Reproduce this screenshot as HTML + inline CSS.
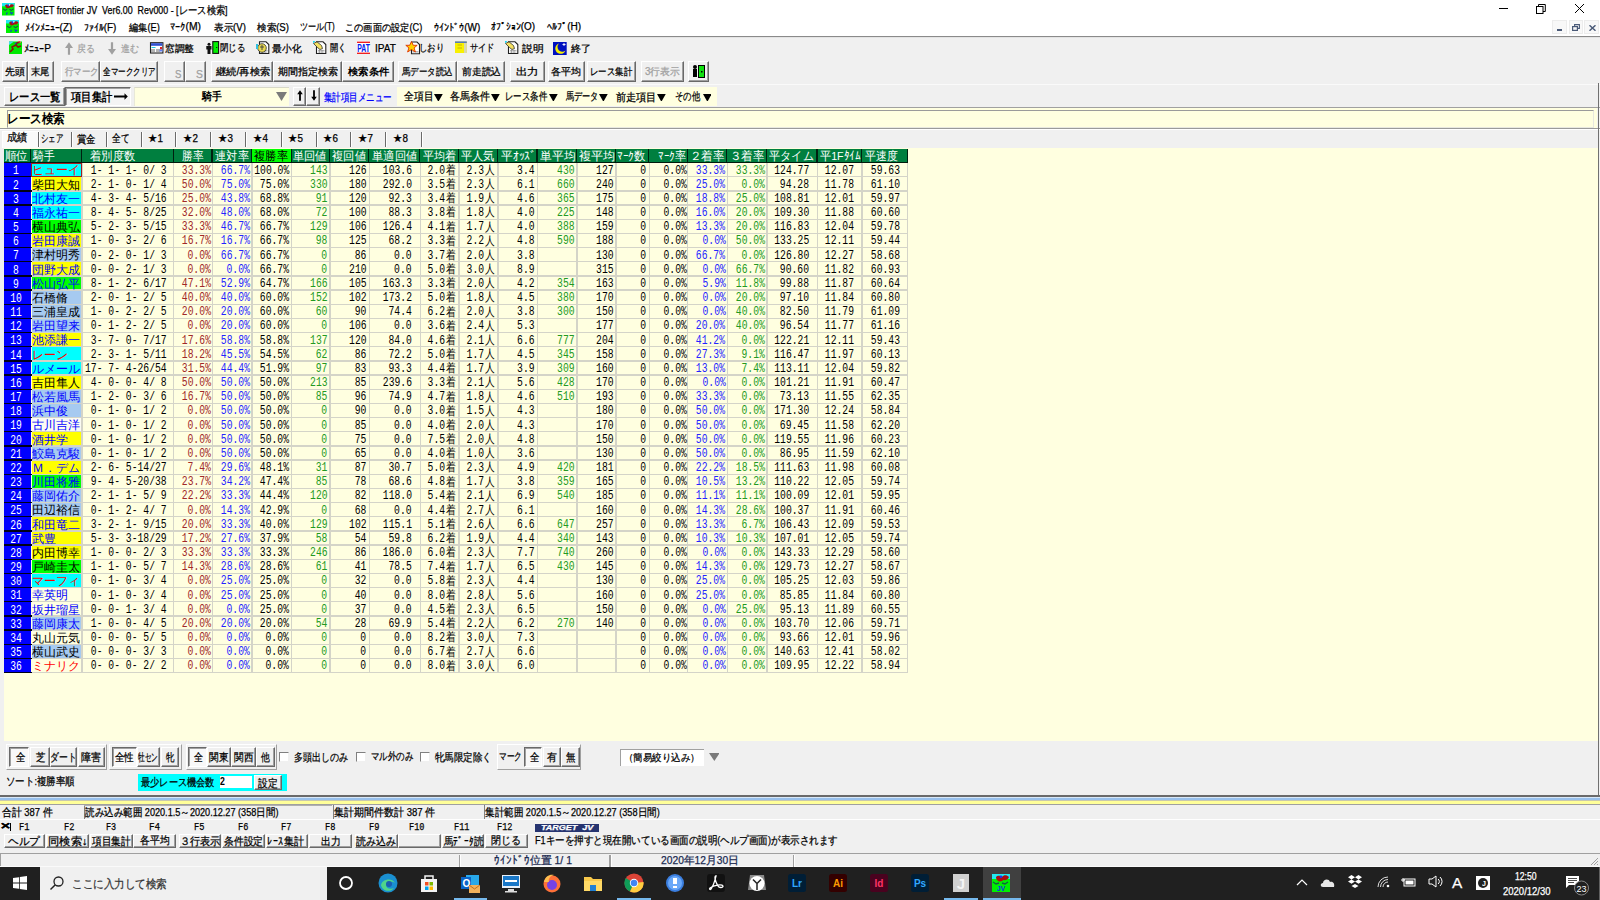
<!DOCTYPE html>
<html><head><meta charset="utf-8"><title>TARGET frontier JV</title>
<style>
html,body{margin:0;padding:0;width:1600px;height:900px;overflow:hidden;background:#f0f0f0}
body{position:relative;font-family:"Liberation Sans",sans-serif}
.a{position:absolute;box-sizing:content-box}
.t{position:absolute;white-space:nowrap;overflow:visible;-webkit-text-stroke:0.25px currentColor}
svg{display:block}
.m{position:absolute;white-space:pre;font-family:'Liberation Mono',monospace;font-size:12px;line-height:14.17px;height:14.17px;color:#000}
.ml{transform-origin:0 50%;transform:scaleX(.81)}
.mr{transform-origin:100% 50%;transform:scaleX(.81)}
.mc{width:100px;text-align:center;transform-origin:50% 50%;transform:scaleX(.81)}
.j{font-family:'Liberation Sans',sans-serif;font-size:12.2px;line-height:0;position:relative;top:0.3px;margin-left:1.2px}
.nm{position:absolute;white-space:pre;font-size:11.7px;line-height:14.17px;height:14.17px}
</style></head><body>
<div class="a" style="left:0.00px;top:0.00px;width:1600.00px;height:36.00px;background:#fff"></div>
<svg class="a" style="left:2.2px;top:3px" width="12.5" height="12.5" viewBox="0 0 12 12"><rect width="12" height="12" fill="#00f000"/><rect width="12" height="3.2" fill="#20e8f0"/><path d="M3 2.2C4 1 6 1.5 7 2.5C8 1 10 0.5 11.5 2C11 4 9 4.5 8 4C7 5 5 5.5 4 4.5C3.5 4 3 3 3 2.2Z" fill="#a81010"/><circle cx="6" cy="2.3" r="0.9" fill="#2030f0"/><circle cx="7.2" cy="1.8" r="0.6" fill="#fff"/><path d="M1 5.5L3 7L5 6M7 6L9 7L11 5.5" fill="none" stroke="#106040" stroke-width="1"/><path d="M5 9L4.3 11M8 8.5L9 10.5L10.5 9" fill="none" stroke="#1030e0" stroke-width="1"/></svg>
<div id="f0" class="t" style="left:19.20px;top:9.60px;line-height:0;font-size:10.5px;color:#000;transform-origin:0 0;transform:scaleX(0.8458);">TARGET frontier JV&nbsp; Ver6.00&nbsp; Rev000 - [レース検索]</div>
<div class="a" style="left:1499.00px;top:8.00px;width:8.75px;height:1.00px;background:#000"></div>
<svg class="a" style="left:1536px;top:4px" width="10" height="10" viewBox="0 0 10 10"><rect x="0.5" y="2.5" width="6.5" height="7" fill="none" stroke="#000" stroke-width="1"/><path d="M2.5 2.5 V0.5 H9.3 V7.5 H7" fill="none" stroke="#000" stroke-width="1"/></svg>
<svg class="a" style="left:1575px;top:4px" width="9" height="9" viewBox="0 0 9 9"><path d="M0 0 L9 9 M9 0 L0 9" stroke="#000" stroke-width="1"/></svg>
<svg class="a" style="left:6px;top:20px" width="13" height="13" viewBox="0 0 12 12"><rect width="12" height="12" fill="#00f000"/><rect width="12" height="3.2" fill="#20e8f0"/><path d="M3 2.2C4 1 6 1.5 7 2.5C8 1 10 0.5 11.5 2C11 4 9 4.5 8 4C7 5 5 5.5 4 4.5C3.5 4 3 3 3 2.2Z" fill="#a81010"/><circle cx="6" cy="2.3" r="0.9" fill="#2030f0"/><circle cx="7.2" cy="1.8" r="0.6" fill="#fff"/><path d="M1 5.5L3 7L5 6M7 6L9 7L11 5.5" fill="none" stroke="#106040" stroke-width="1"/><path d="M5 9L4.3 11M8 8.5L9 10.5L10.5 9" fill="none" stroke="#1030e0" stroke-width="1"/></svg>
<div id="f1" class="t" style="left:25.30px;top:27.80px;line-height:0;font-size:10px;color:#000;transform-origin:0 0;transform:scaleX(0.9886);">ﾒｲﾝﾒﾆｭｰ(Z)</div>
<div id="f2" class="t" style="left:83.50px;top:27.80px;line-height:0;font-size:10px;color:#000;transform-origin:0 0;transform:scaleX(0.9834);">ﾌｧｲﾙ(F)</div>
<div id="f3" class="t" style="left:128.52px;top:27.80px;line-height:0;font-size:10px;color:#000;transform-origin:0 0;transform:scaleX(0.9235);">編集(E)</div>
<div id="f4" class="t" style="left:170.30px;top:27.30px;line-height:0;font-size:10px;color:#000;transform-origin:0 0;transform:scaleX(1.0351);">ﾏｰｸ(M)</div>
<div id="f5" class="t" style="left:213.90px;top:27.80px;line-height:0;font-size:10px;color:#000;transform-origin:0 0;transform:scaleX(0.9545);">表示(V)</div>
<div id="f6" class="t" style="left:257.40px;top:27.80px;line-height:0;font-size:10px;color:#000;transform-origin:0 0;transform:scaleX(0.9576);">検索(S)</div>
<div id="f7" class="t" style="left:300.30px;top:27.30px;line-height:0;font-size:10px;color:#000;transform-origin:0 0;transform:scaleX(0.8106);">ツール(T)</div>
<div id="f8" class="t" style="left:345.38px;top:27.80px;line-height:0;font-size:10px;color:#000;transform-origin:0 0;transform:scaleX(0.9206);">この画面の設定(C)</div>
<div id="f9" class="t" style="left:433.50px;top:27.80px;line-height:0;font-size:10px;color:#000;transform-origin:0 0;transform:scaleX(1.0051);">ｳｲﾝﾄﾞｳ(W)</div>
<div id="f10" class="t" style="left:491.00px;top:27.30px;line-height:0;font-size:10px;color:#000;transform-origin:0 0;transform:scaleX(0.9930);">ｵﾌﾟｼｮﾝ(O)</div>
<div id="f11" class="t" style="left:547.00px;top:27.30px;line-height:0;font-size:10px;color:#000;transform-origin:0 0;transform:scaleX(1.0074);">ﾍﾙﾌﾟ(H)</div>
<div class="a" style="left:1552.40px;top:20.30px;width:14.60px;height:14.20px;background:#f8f8f8;border:1px solid #ececec;box-sizing:border-box"></div>
<div class="a" style="left:1568.50px;top:20.30px;width:14.30px;height:14.20px;background:#f8f8f8;border:1px solid #ececec;box-sizing:border-box"></div>
<div class="a" style="left:1584.30px;top:20.30px;width:14.70px;height:14.20px;background:#f8f8f8;border:1px solid #ececec;box-sizing:border-box"></div>
<div class="a" style="left:1556.50px;top:29.30px;width:5.30px;height:1.50px;background:#4a5a78"></div>
<svg class="a" style="left:1572px;top:24px" width="8" height="7" viewBox="0 0 8 7"><rect x="0.6" y="2.6" width="4.8" height="3.8" fill="none" stroke="#4a5a78" stroke-width="1.2"/><path d="M2.6 2.6V0.6H7.4V4.4H5.4" fill="none" stroke="#4a5a78" stroke-width="1.1"/></svg>
<svg class="a" style="left:1589px;top:25px" width="7" height="6" viewBox="0 0 7 6"><path d="M0.5 0.3L6.5 5.7M6.5 0.3L0.5 5.7" stroke="#4a5a78" stroke-width="1.5"/></svg>
<div class="a" style="left:0.00px;top:35.50px;width:1600.00px;height:1.20px;background:#8a8a8a"></div>
<div class="a" style="left:0.00px;top:36.70px;width:1600.00px;height:1.00px;background:#e4e4e4"></div>
<div class="a" style="left:0.00px;top:37.70px;width:1600.00px;height:703.30px;background:#f0f0f0"></div>
<svg class="a" style="left:9px;top:41px" width="14" height="13" viewBox="0 0 14 13" overflow="visible"><rect x="0" y="0.5" width="13" height="12.5" fill="#00e800"/><path d="M0 0.5H5L0 4Z" fill="#40e0f0"/><path d="M1 11L4 8L3 6L7 4L8 2L11 1M7 4L9 6L12 5" fill="none" stroke="#8a1010" stroke-width="1.6"/><path d="M5 2.5L7 1.5L7.5 3Z" fill="#2030e0"/><path d="M9 0.5L12 1.5" stroke="#ff5050" stroke-width="1"/></svg>
<div id="f12" class="t" style="left:23.50px;top:48.60px;line-height:0;font-size:10px;color:#000;transform-origin:0 0;transform:scaleX(1.0185);">ﾒﾆｭｰP</div>
<svg class="a" style="left:64.7px;top:42px" width="8" height="13" viewBox="0 0 8 13" overflow="visible"><path d="M4 0.3L8 6H5.1V12.8H2.9V6H0Z" fill="#a0a0a0"/></svg>
<div id="f13" class="t" style="left:77.00px;top:48.60px;line-height:0;font-size:10px;color:#a0a0a0;transform-origin:0 0;transform:scaleX(0.8842);">戻る</div>
<svg class="a" style="left:107.6px;top:42px" width="8" height="13" viewBox="0 0 8 13" overflow="visible"><path d="M4 12.7L8 7H5.1V0.2H2.9V7H0Z" fill="#a0a0a0"/></svg>
<div id="f14" class="t" style="left:121.00px;top:48.60px;line-height:0;font-size:10px;color:#a0a0a0;transform-origin:0 0;transform:scaleX(0.8900);">進む</div>
<svg class="a" style="left:150px;top:41px" width="14" height="13" viewBox="0 0 14 13" overflow="visible"><rect x="0.5" y="1.7" width="12.4" height="10.3" fill="#fff" stroke="#202020" stroke-width="1.1"/><rect x="1" y="2.2" width="11.4" height="2.6" fill="#3050d0"/><path d="M1.5 6.5H5.5" stroke="#20c8e0" stroke-width="1"/><path d="M2 8V11M4 8V11M7 8V11M9 8V11" stroke="#404040" stroke-width=".8"/><rect x="10" y="6" width="2" height="2.5" fill="#e02020"/><rect x="9.5" y="8.5" width="3" height="2" fill="#6080f0"/></svg>
<div id="f15" class="t" style="left:165.00px;top:48.60px;line-height:0;font-size:10px;color:#000;transform-origin:0 0;transform:scaleX(0.9667);">窓調整</div>
<svg class="a" style="left:205.5px;top:41px" width="14" height="13" viewBox="0 0 14 13" overflow="visible"><rect x="6.8" y="0.6" width="5.8" height="11.8" fill="#00f000" stroke="#101010" stroke-width="1.1"/><rect x="10.2" y="6" width="1" height="1" fill="#000"/><circle cx="3" cy="3.2" r="1.5" fill="#101010"/><path d="M0.3 5H5.5V8.5H4.5V13H1.5V8.5H0.3Z" fill="#101010"/></svg>
<div id="f16" class="t" style="left:220.40px;top:48.10px;line-height:0;font-size:10px;color:#000;transform-origin:0 0;transform:scaleX(0.8414);">閉じる</div>
<svg class="a" style="left:256px;top:41px" width="14" height="13" viewBox="0 0 14 13" overflow="visible"><path d="M3.5 0.8H10L12.8 3.6V12.5H3.5Z" fill="#fff" stroke="#202020" stroke-width="1.1"/><path d="M5 9.5H11.5M5 11H11.5M6.5 8.5V12M9 8.5V12" stroke="#808080" stroke-width=".6"/><circle cx="6" cy="7" r="4.3" fill="#e8d850" stroke="#303030" stroke-width=".8"/><path d="M4 6H8M6 4V9" stroke="#404040" stroke-width=".9"/><path d="M0 3H2V8H0Z" fill="#30c0e0"/></svg>
<div id="f17" class="t" style="left:271.60px;top:48.60px;line-height:0;font-size:10px;color:#000;transform-origin:0 0;transform:scaleX(0.9800);">最小化</div>
<svg class="a" style="left:312.5px;top:41px" width="14" height="13" viewBox="0 0 14 13" overflow="visible"><path d="M3.5 0.8H10L12.8 3.6V12.5H3.5Z" fill="#fff" stroke="#202020" stroke-width="1.1"/><path d="M5 9.5H11.5M5 11H11.5M6.5 8.5V12M9 8.5V12" stroke="#808080" stroke-width=".6"/><path d="M0.5 2.5L4 0.8L8.5 4.5L9.5 7.5L7 8.5L4.5 6.5Z" fill="#f4e060" stroke="#303030" stroke-width=".8"/><path d="M0 0H2.5L0 2.5Z" fill="#20d8f0"/></svg>
<div id="f18" class="t" style="left:330.00px;top:48.10px;line-height:0;font-size:10px;color:#000;transform-origin:0 0;transform:scaleX(0.8235);">開く</div>
<svg class="a" style="left:356.8px;top:41px" width="14" height="13" viewBox="0 0 14 13" overflow="visible"><rect x="0" y="0" width="13" height="13" fill="#fff"/><text x="0.2" y="11" font-size="10.5" font-weight="bold" fill="#0020f0" font-family="Liberation Sans" textLength="12.6" lengthAdjust="spacingAndGlyphs">PAT</text><rect x="0" y="11.6" width="13" height="1.4" fill="#f02020"/><rect x="0" y="0.6" width="13" height="1.4" fill="#f02020"/></svg>
<div id="f19" class="t" style="left:374.80px;top:49.10px;line-height:0;font-size:10px;color:#000;transform-origin:0 0;transform:scaleX(1.0032);">IPAT</div>
<svg class="a" style="left:406px;top:41px" width="14" height="13" viewBox="0 0 14 13" overflow="visible"><path d="M5.5 1H11L13.5 3.5V12.8H5.5Z" fill="#fff" stroke="#202020" stroke-width="1.1"/><path d="M6.5 10.5H12.5M6.5 12H12.5" stroke="#808080" stroke-width=".6"/><path d="M5.5 0.5L7.3 4.3H11.2L8.1 6.9L9.4 11L5.5 8.5L1.6 11L2.9 6.9L-0.2 4.3H3.7Z" fill="#ffd000" stroke="#e03000" stroke-width=".9"/></svg>
<div id="f20" class="t" style="left:419.31px;top:48.10px;line-height:0;font-size:10px;color:#000;transform-origin:0 0;transform:scaleX(0.8462);">しおり</div>
<svg class="a" style="left:454.9px;top:41px" width="14" height="13" viewBox="0 0 14 13" overflow="visible"><rect x="0" y="0.5" width="11.8" height="11.5" fill="#f8f000"/><rect x="0" y="0.5" width="11.8" height="1.3" fill="#3060e0"/><rect x="9" y="2" width="2.8" height="10" fill="#d8d8b0"/><path d="M2.5 4H7M2.5 7H7" stroke="#b0a000" stroke-width=".7"/></svg>
<div id="f21" class="t" style="left:469.70px;top:48.10px;line-height:0;font-size:10px;color:#000;transform-origin:0 0;transform:scaleX(0.8241);">サイド</div>
<svg class="a" style="left:504.8px;top:41px" width="14" height="13" viewBox="0 0 14 13" overflow="visible"><path d="M3.5 0.8H10L12.8 3.6V12.5H3.5Z" fill="#fff" stroke="#202020" stroke-width="1.1"/><path d="M5 9.5H11.5M5 11H11.5M6.5 8.5V12M9 8.5V12" stroke="#808080" stroke-width=".6"/><path d="M0.5 2.5L4 0.8L8.5 4.5L9.5 7.5L7 8.5L4.5 6.5Z" fill="#f4e060" stroke="#303030" stroke-width=".8"/><path d="M0 0H2.5L0 2.5Z" fill="#20d8f0"/></svg>
<div id="f22" class="t" style="left:521.70px;top:48.60px;line-height:0;font-size:10px;color:#000;transform-origin:0 0;transform:scaleX(1.0895);">説明</div>
<svg class="a" style="left:553.3px;top:41.5px" width="14" height="13" viewBox="0 0 14 13" overflow="visible"><rect x="0" y="0" width="13.7" height="13" fill="#0010c0"/><path d="M6 1.5A5.3 5.3 0 1 0 12.5 8.5A4.3 4.3 0 1 1 6 1.5Z" fill="#f8f000"/><path d="M11 1V4M9.5 2.5H12.5" stroke="#fff" stroke-width=".9"/></svg>
<div id="f23" class="t" style="left:571.00px;top:48.60px;line-height:0;font-size:10px;color:#000;transform-origin:0 0;">終了</div>
<div class="a" style="left:2.00px;top:60.80px;width:26.00px;height:21.00px;box-sizing:border-box;background:#f0f0f0;border-top:1px solid #fff;border-left:1px solid #fff;border-right:1px solid #696969;border-bottom:1px solid #696969;box-shadow:inset -1px -1px #a0a0a0;"></div>
<div id="f24" class="t" style="left:4.70px;top:72.30px;line-height:0;font-size:10px;color:#000;transform-origin:0 0;transform:scaleX(0.9850);">先頭</div>
<div class="a" style="left:28.00px;top:60.80px;width:26.00px;height:21.00px;box-sizing:border-box;background:#f0f0f0;border-top:1px solid #fff;border-left:1px solid #fff;border-right:1px solid #696969;border-bottom:1px solid #696969;box-shadow:inset -1px -1px #a0a0a0;"></div>
<div id="f25" class="t" style="left:31.00px;top:72.30px;line-height:0;font-size:10px;color:#000;transform-origin:0 0;transform:scaleX(0.9350);">末尾</div>
<div class="a" style="left:61.00px;top:60.80px;width:39.00px;height:21.00px;box-sizing:border-box;background:#f0f0f0;border-top:1px solid #fff;border-left:1px solid #fff;border-right:1px solid #696969;border-bottom:1px solid #696969;box-shadow:inset -1px -1px #a0a0a0;"></div>
<div id="f26" class="t" style="left:64.70px;top:71.80px;line-height:0;font-size:10px;color:#a0a0a0;transform-origin:0 0;transform:scaleX(0.8436);">行マーク</div>
<div class="a" style="left:100.00px;top:60.80px;width:58.00px;height:21.00px;box-sizing:border-box;background:#f0f0f0;border-top:1px solid #fff;border-left:1px solid #fff;border-right:1px solid #696969;border-bottom:1px solid #696969;box-shadow:inset -1px -1px #a0a0a0;"></div>
<div id="f27" class="t" style="left:103.00px;top:72.30px;line-height:0;font-size:10px;color:#000;transform-origin:0 0;transform:scaleX(0.7529);">全マーククリア</div>
<div class="a" style="left:164.00px;top:60.80px;width:21.00px;height:21.00px;box-sizing:border-box;background:#f0f0f0;border-top:1px solid #fff;border-left:1px solid #fff;border-right:1px solid #696969;border-bottom:1px solid #696969;box-shadow:inset -1px -1px #a0a0a0;"></div>
<div class="a" style="left:185.00px;top:60.80px;width:21.00px;height:21.00px;box-sizing:border-box;background:#f0f0f0;border-top:1px solid #fff;border-left:1px solid #fff;border-right:1px solid #696969;border-bottom:1px solid #696969;box-shadow:inset -1px -1px #a0a0a0;"></div>
<div class="a" style="left:211.00px;top:60.80px;width:62.00px;height:21.00px;box-sizing:border-box;background:#f0f0f0;border-top:1px solid #fff;border-left:1px solid #fff;border-right:1px solid #696969;border-bottom:1px solid #696969;box-shadow:inset -1px -1px #a0a0a0;"></div>
<div id="f28" class="t" style="left:215.83px;top:72.30px;line-height:0;font-size:10px;color:#000;transform-origin:0 0;transform:scaleX(1.0264);">継続/再検索</div>
<div class="a" style="left:273.00px;top:60.80px;width:69.00px;height:21.00px;box-sizing:border-box;background:#f0f0f0;border-top:1px solid #fff;border-left:1px solid #fff;border-right:1px solid #696969;border-bottom:1px solid #696969;box-shadow:inset -1px -1px #a0a0a0;"></div>
<div id="f29" class="t" style="left:277.80px;top:72.30px;line-height:0;font-size:10px;color:#000;transform-origin:0 0;">期間指定検索</div>
<div class="a" style="left:342.00px;top:60.80px;width:52.00px;height:21.00px;box-sizing:border-box;background:#f0f0f0;border-top:1px solid #fff;border-left:1px solid #fff;border-right:1px solid #696969;border-bottom:1px solid #696969;box-shadow:inset -1px -1px #a0a0a0;"></div>
<div id="f30" class="t" style="left:347.73px;top:72.30px;line-height:0;font-size:10px;color:#000;transform-origin:0 0;transform:scaleX(1.0317);font-weight:bold;;-webkit-text-stroke:0">検索条件</div>
<div class="a" style="left:398.00px;top:60.80px;width:59.00px;height:21.00px;box-sizing:border-box;background:#f0f0f0;border-top:1px solid #fff;border-left:1px solid #fff;border-right:1px solid #696969;border-bottom:1px solid #696969;box-shadow:inset -1px -1px #a0a0a0;"></div>
<div id="f31" class="t" style="left:402.44px;top:72.30px;line-height:0;font-size:10px;color:#000;transform-origin:0 0;transform:scaleX(0.8426);">馬データ読込</div>
<div class="a" style="left:457.00px;top:60.80px;width:48.00px;height:21.00px;box-sizing:border-box;background:#f0f0f0;border-top:1px solid #fff;border-left:1px solid #fff;border-right:1px solid #696969;border-bottom:1px solid #696969;box-shadow:inset -1px -1px #a0a0a0;"></div>
<div id="f32" class="t" style="left:461.70px;top:72.30px;line-height:0;font-size:10px;color:#000;transform-origin:0 0;transform:scaleX(0.9825);">前走読込</div>
<div class="a" style="left:510.00px;top:60.80px;width:35.00px;height:21.00px;box-sizing:border-box;background:#f0f0f0;border-top:1px solid #fff;border-left:1px solid #fff;border-right:1px solid #696969;border-bottom:1px solid #696969;box-shadow:inset -1px -1px #a0a0a0;"></div>
<div id="f33" class="t" style="left:516.00px;top:72.30px;line-height:0;font-size:10px;color:#000;transform-origin:0 0;transform:scaleX(1.1421);">出力</div>
<div class="a" style="left:548.00px;top:60.80px;width:37.00px;height:21.00px;box-sizing:border-box;background:#f0f0f0;border-top:1px solid #fff;border-left:1px solid #fff;border-right:1px solid #696969;border-bottom:1px solid #696969;box-shadow:inset -1px -1px #a0a0a0;"></div>
<div id="f34" class="t" style="left:551.00px;top:72.30px;line-height:0;font-size:10px;color:#000;transform-origin:0 0;">各平均</div>
<div class="a" style="left:587.00px;top:60.80px;width:49.00px;height:21.00px;box-sizing:border-box;background:#f0f0f0;border-top:1px solid #fff;border-left:1px solid #fff;border-right:1px solid #696969;border-bottom:1px solid #696969;box-shadow:inset -1px -1px #a0a0a0;"></div>
<div id="f35" class="t" style="left:589.86px;top:72.30px;line-height:0;font-size:10px;color:#000;transform-origin:0 0;transform:scaleX(0.8429);">レース集計</div>
<div class="a" style="left:641.00px;top:60.80px;width:43.00px;height:21.00px;box-sizing:border-box;background:#f0f0f0;border-top:1px solid #fff;border-left:1px solid #fff;border-right:1px solid #696969;border-bottom:1px solid #696969;box-shadow:inset -1px -1px #a0a0a0;"></div>
<div id="f36" class="t" style="left:645.00px;top:72.30px;line-height:0;font-size:10px;color:#a0a0a0;transform-origin:0 0;transform:scaleX(0.9786);">3行表示</div>
<div class="a" style="left:688.00px;top:60.80px;width:21.00px;height:21.00px;box-sizing:border-box;background:#f0f0f0;border-top:1px solid #fff;border-left:1px solid #fff;border-right:1px solid #696969;border-bottom:1px solid #696969;box-shadow:inset -1px -1px #a0a0a0;"></div>
<div id="f37" class="t" style="left:175.40px;top:73.80px;line-height:0;font-size:10.5px;color:#a0a0a0;transform-origin:0 0;transform:scaleX(0.9167);">S</div>
<div id="f38" class="t" style="left:196.00px;top:73.80px;line-height:0;font-size:10.5px;color:#a0a0a0;transform-origin:0 0;transform:scaleX(0.9833);">S</div>
<svg class="a" style="left:692px;top:64px" width="13" height="14" viewBox="0 0 13 14"><circle cx="3" cy="3" r="2" fill="#000"/><path d="M1 5H5V13H1Z" fill="#000"/><rect x="6.5" y="1.5" width="6" height="12" fill="#10e010" stroke="#000"/><rect x="9" y="7" width="1.5" height="1.5" fill="#000"/></svg>
<div class="a" style="left:0.00px;top:84.00px;width:1600.00px;height:1.00px;background:#fafafa"></div>
<div class="a" style="left:4.00px;top:86.50px;width:61.00px;height:19.50px;box-sizing:border-box;background:#f0f0f0;border-top:1px solid #fff;border-left:1px solid #fff;border-right:1px solid #696969;border-bottom:1px solid #696969;box-shadow:inset -1px -1px #a0a0a0;"></div>
<div id="f39" class="t" style="left:8.54px;top:96.60px;line-height:0;font-size:11.5px;color:#000;transform-origin:0 0;transform:scaleX(0.8576);font-weight:bold;;-webkit-text-stroke:0">レース一覧</div>
<div class="a" style="left:65.00px;top:86.50px;width:66.00px;height:19.50px;box-sizing:border-box;background:#f4f4f4;border-top:1px solid #696969;border-left:1px solid #696969;border-right:1px solid #fff;border-bottom:1px solid #fff;box-shadow:inset 1px 1px #a0a0a0;"></div>
<div id="f40" class="t" style="left:71.26px;top:96.60px;line-height:0;font-size:11.5px;color:#000;transform-origin:0 0;transform:scaleX(0.8612);font-weight:bold;;-webkit-text-stroke:0">項目集計</div>
<svg class="a" style="left:113.5px;top:93px" width="14" height="7" viewBox="0 0 14 7"><path d="M0 2.6H10.5V0.3L13.8 3.5L10.5 6.7V4.4H0Z" fill="#000"/></svg>
<div class="a" style="left:134.00px;top:86.70px;width:155.00px;height:19.00px;background:#ffffe0;border-top:1px solid #d8d8c8;border-left:1px solid #e8e8d8;box-sizing:border-box"></div>
<div id="f41" class="t" style="left:201.60px;top:96.40px;line-height:0;font-size:11px;color:#000;transform-origin:0 0;transform:scaleX(0.9000);font-weight:bold;-webkit-text-stroke:0">騎手</div>
<svg class="a" style="left:276px;top:92px" width="11" height="9" viewBox="0 0 11 9"><path d="M0 0H11L5.5 9Z" fill="#7a7a7a"/></svg>
<div class="a" style="left:292.50px;top:86.50px;width:13.50px;height:19.50px;box-sizing:border-box;background:#f0f0f0;border-top:1px solid #fff;border-left:1px solid #fff;border-right:1px solid #696969;border-bottom:1px solid #696969;box-shadow:inset -1px -1px #a0a0a0;"></div>
<div class="a" style="left:306.00px;top:86.50px;width:13.50px;height:19.50px;box-sizing:border-box;background:#f0f0f0;border-top:1px solid #fff;border-left:1px solid #fff;border-right:1px solid #696969;border-bottom:1px solid #696969;box-shadow:inset -1px -1px #a0a0a0;"></div>
<svg class="a" style="left:297px;top:90px" width="6" height="11" viewBox="0 0 6 11"><path d="M3 0.3L5.8 4.2H3.9V10.8H2.1V4.2H0.2Z" fill="#000"/></svg>
<svg class="a" style="left:310.5px;top:90px" width="6" height="11" viewBox="0 0 6 11"><path d="M3 10.7L5.8 6.8H3.9V0.2H2.1V6.8H0.2Z" fill="#000"/></svg>
<div id="f42" class="t" style="left:324.00px;top:96.80px;line-height:0;font-size:10.5px;color:#0000ff;transform-origin:0 0;transform:scaleX(0.7727);">集計項目メニュー</div>
<div class="a" style="left:396.60px;top:86.50px;width:320.40px;height:19.00px;background:#ffffe0"></div>
<div id="f43" class="t" style="left:403.75px;top:96.10px;line-height:0;font-size:10.5px;color:#000;transform-origin:0 0;transform:scaleX(0.8871);">全項目</div>
<svg class="a" style="left:433.75px;top:93.6px" width="8.75" height="7.8" viewBox="0 0 10 9" preserveAspectRatio="none"><path d="M0 0H10L5 9Z" fill="#000"/></svg>
<div id="f44" class="t" style="left:450.00px;top:96.10px;line-height:0;font-size:10.5px;color:#000;transform-origin:0 0;transform:scaleX(0.8977);">各馬条件</div>
<svg class="a" style="left:491.25px;top:93.6px" width="8.75" height="7.8" viewBox="0 0 10 9" preserveAspectRatio="none"><path d="M0 0H10L5 9Z" fill="#000"/></svg>
<div id="f45" class="t" style="left:505.49px;top:96.10px;line-height:0;font-size:10.5px;color:#000;transform-origin:0 0;transform:scaleX(0.7639);">レース条件</div>
<svg class="a" style="left:549.25px;top:93.6px" width="8.75" height="7.8" viewBox="0 0 10 9" preserveAspectRatio="none"><path d="M0 0H10L5 9Z" fill="#000"/></svg>
<div id="f46" class="t" style="left:565.74px;top:96.10px;line-height:0;font-size:10.5px;color:#000;transform-origin:0 0;transform:scaleX(0.7386);">馬データ</div>
<svg class="a" style="left:598.75px;top:93.6px" width="8.75" height="7.8" viewBox="0 0 10 9" preserveAspectRatio="none"><path d="M0 0H10L5 9Z" fill="#000"/></svg>
<div id="f47" class="t" style="left:616.25px;top:96.60px;line-height:0;font-size:10.5px;color:#000;transform-origin:0 0;transform:scaleX(0.9226);">前走項目</div>
<svg class="a" style="left:656.75px;top:93.6px" width="8.75" height="7.8" viewBox="0 0 10 9" preserveAspectRatio="none"><path d="M0 0H10L5 9Z" fill="#000"/></svg>
<div id="f48" class="t" style="left:675.00px;top:96.10px;line-height:0;font-size:10.5px;color:#000;transform-origin:0 0;transform:scaleX(0.7576);">その他</div>
<svg class="a" style="left:702.5px;top:93.6px" width="8.75" height="7.8" viewBox="0 0 10 9" preserveAspectRatio="none"><path d="M0 0H10L5 9Z" fill="#000"/></svg>
<div class="a" style="left:0.00px;top:106.80px;width:1600.00px;height:1.20px;background:#a0a0a0"></div>
<div class="a" style="left:0.00px;top:108.00px;width:1597.00px;height:20.50px;background:#ffffe0"></div>
<div class="a" style="left:6.50px;top:109.50px;width:1587.00px;height:18.50px;background:#ffffe0;border-top:1.3px solid #9a9a9a;border-left:1.3px solid #9a9a9a;border-bottom:1px solid #e8e8e0;border-right:1px solid #e8e8e0;box-sizing:border-box"></div>
<div id="f49" class="t" style="left:7.31px;top:119.10px;line-height:0;font-size:12.5px;color:#000;transform-origin:0 0;transform:scaleX(0.8906);font-weight:bold;-webkit-text-stroke:0">レース検索</div>
<div class="a" style="left:0.00px;top:127.50px;width:1600.00px;height:1.20px;background:#9a9a9a"></div>
<div class="a" style="left:0.00px;top:128.70px;width:1600.00px;height:1.00px;background:#fff"></div>
<div class="a" style="left:2.00px;top:130.50px;width:36.80px;height:17.00px;background:#fafafa;border-top:1px solid #fff;border-left:1px solid #fff;box-sizing:border-box"></div>
<div id="f50" class="t" style="left:6.70px;top:136.80px;line-height:0;font-size:10.5px;color:#000;transform-origin:0 0;transform:scaleX(0.9227);">成績</div>
<div class="a" style="left:37.80px;top:132.00px;width:1.00px;height:14.50px;background:#6a6a6a;box-shadow:1px 0 #fff"></div>
<div id="f51" class="t" style="left:41.32px;top:138.00px;line-height:0;font-size:10.5px;color:#000;transform-origin:0 0;transform:scaleX(0.6781);">シェア</div>
<div class="a" style="left:71.00px;top:132.00px;width:1.00px;height:14.50px;background:#6a6a6a;box-shadow:1px 0 #fff"></div>
<div id="f52" class="t" style="left:77.20px;top:138.50px;line-height:0;font-size:10.5px;color:#000;transform-origin:0 0;transform:scaleX(0.8545);">賞金</div>
<div class="a" style="left:106.00px;top:132.00px;width:1.00px;height:14.50px;background:#6a6a6a;box-shadow:1px 0 #fff"></div>
<div id="f53" class="t" style="left:112.40px;top:138.00px;line-height:0;font-size:10.5px;color:#000;transform-origin:0 0;transform:scaleX(0.7905);">全て</div>
<div class="a" style="left:141.00px;top:132.00px;width:1.00px;height:14.50px;background:#6a6a6a;box-shadow:1px 0 #fff"></div>
<div id="f54" class="t" style="left:147.70px;top:138.00px;line-height:0;font-size:10.5px;color:#000;transform-origin:0 0;transform:scaleX(0.9375);">★1</div>
<div class="a" style="left:175.00px;top:132.00px;width:1.00px;height:14.50px;background:#6a6a6a;box-shadow:1px 0 #fff"></div>
<div id="f55" class="t" style="left:182.70px;top:138.00px;line-height:0;font-size:10.5px;color:#000;transform-origin:0 0;transform:scaleX(0.9375);">★2</div>
<div class="a" style="left:210.00px;top:132.00px;width:1.00px;height:14.50px;background:#6a6a6a;box-shadow:1px 0 #fff"></div>
<div id="f56" class="t" style="left:217.70px;top:138.00px;line-height:0;font-size:10.5px;color:#000;transform-origin:0 0;transform:scaleX(0.9375);">★3</div>
<div class="a" style="left:245.00px;top:132.00px;width:1.00px;height:14.50px;background:#6a6a6a;box-shadow:1px 0 #fff"></div>
<div id="f57" class="t" style="left:252.70px;top:138.00px;line-height:0;font-size:10.5px;color:#000;transform-origin:0 0;transform:scaleX(0.9375);">★4</div>
<div class="a" style="left:281.00px;top:132.00px;width:1.00px;height:14.50px;background:#6a6a6a;box-shadow:1px 0 #fff"></div>
<div id="f58" class="t" style="left:287.70px;top:138.00px;line-height:0;font-size:10.5px;color:#000;transform-origin:0 0;transform:scaleX(0.9375);">★5</div>
<div class="a" style="left:316.00px;top:132.00px;width:1.00px;height:14.50px;background:#6a6a6a;box-shadow:1px 0 #fff"></div>
<div id="f59" class="t" style="left:322.70px;top:138.00px;line-height:0;font-size:10.5px;color:#000;transform-origin:0 0;transform:scaleX(0.9375);">★6</div>
<div class="a" style="left:350.00px;top:132.00px;width:1.00px;height:14.50px;background:#6a6a6a;box-shadow:1px 0 #fff"></div>
<div id="f60" class="t" style="left:357.70px;top:138.00px;line-height:0;font-size:10.5px;color:#000;transform-origin:0 0;transform:scaleX(0.9375);">★7</div>
<div class="a" style="left:385.00px;top:132.00px;width:1.00px;height:14.50px;background:#6a6a6a;box-shadow:1px 0 #fff"></div>
<div id="f61" class="t" style="left:392.70px;top:138.00px;line-height:0;font-size:10.5px;color:#000;transform-origin:0 0;transform:scaleX(0.9375);">★8</div>
<div class="a" style="left:421.00px;top:132.00px;width:1.00px;height:14.50px;background:#6a6a6a;box-shadow:1px 0 #fff"></div>
<div class="a" style="left:4.00px;top:147.50px;width:1593.50px;height:593.50px;background:#ffffe0"></div>
<div class="a" style="left:1598.00px;top:83.00px;width:1.30px;height:658.00px;background:#707070"></div>
<div class="a" style="left:4.00px;top:149.00px;width:903.70px;height:13.60px;background:#007f3f"></div>
<div id="f62" class="t" style="left:5.00px;top:155.80px;line-height:0;font-size:11.5px;color:#fff;transform-origin:0 0;transform:scaleX(0.9583);-webkit-text-stroke:0">順位</div>
<div class="a" style="left:30.00px;top:149.00px;width:1.20px;height:14.10px;background:#002010"></div>
<div id="f63" class="t" style="left:33.19px;top:156.30px;line-height:0;font-size:11.5px;color:#fff;transform-origin:0 0;transform:scaleX(0.8920);-webkit-text-stroke:0">騎手</div>
<div class="a" style="left:81.00px;top:149.00px;width:1.20px;height:14.10px;background:#002010"></div>
<div id="f64" class="t" style="left:89.80px;top:156.30px;line-height:0;font-size:11.5px;color:#fff;transform-origin:0 0;transform:scaleX(0.9417);-webkit-text-stroke:0">着別度数</div>
<div class="a" style="left:172.60px;top:149.00px;width:1.20px;height:14.10px;background:#002010"></div>
<div id="f65" class="t" style="left:181.50px;top:156.30px;line-height:0;font-size:11.5px;color:#fff;transform-origin:0 0;transform:scaleX(0.8958);-webkit-text-stroke:0">勝率</div>
<div class="a" style="left:211.40px;top:149.00px;width:1.20px;height:14.10px;background:#002010"></div>
<div id="f66" class="t" style="left:214.60px;top:156.30px;line-height:0;font-size:11.5px;color:#fff;transform-origin:0 0;transform:scaleX(0.9389);-webkit-text-stroke:0">連対率</div>
<div class="a" style="left:251.00px;top:149.00px;width:1.20px;height:14.10px;background:#002010"></div>
<div class="a" style="left:252.00px;top:149.00px;width:39.50px;height:13.60px;background:#00ff00"></div>
<div id="f67" class="t" style="left:254.00px;top:156.30px;line-height:0;font-size:11.5px;color:#000;transform-origin:0 0;transform:scaleX(0.9417);-webkit-text-stroke:0">複勝率</div>
<div class="a" style="left:290.50px;top:149.00px;width:1.20px;height:14.10px;background:#002010"></div>
<div id="f68" class="t" style="left:293.00px;top:155.80px;line-height:0;font-size:11.5px;color:#fff;transform-origin:0 0;transform:scaleX(0.9361);-webkit-text-stroke:0">単回値</div>
<div class="a" style="left:329.00px;top:149.00px;width:1.20px;height:14.10px;background:#002010"></div>
<div id="f69" class="t" style="left:331.70px;top:155.80px;line-height:0;font-size:11.5px;color:#fff;transform-origin:0 0;transform:scaleX(0.9389);-webkit-text-stroke:0">複回値</div>
<div class="a" style="left:368.30px;top:149.00px;width:1.20px;height:14.10px;background:#002010"></div>
<div id="f70" class="t" style="left:371.50px;top:156.30px;line-height:0;font-size:11.5px;color:#fff;transform-origin:0 0;transform:scaleX(0.9427);-webkit-text-stroke:0">単適回値</div>
<div class="a" style="left:419.30px;top:149.00px;width:1.20px;height:14.10px;background:#002010"></div>
<div id="f71" class="t" style="left:422.50px;top:156.30px;line-height:0;font-size:11.5px;color:#fff;transform-origin:0 0;transform:scaleX(0.9167);-webkit-text-stroke:0">平均着</div>
<div class="a" style="left:458.00px;top:149.00px;width:1.20px;height:14.10px;background:#002010"></div>
<div id="f72" class="t" style="left:461.30px;top:155.80px;line-height:0;font-size:11.5px;color:#fff;transform-origin:0 0;transform:scaleX(0.9361);-webkit-text-stroke:0">平人気</div>
<div class="a" style="left:497.00px;top:149.00px;width:1.20px;height:14.10px;background:#002010"></div>
<div id="f73" class="t" style="left:500.80px;top:155.80px;line-height:0;font-size:11.5px;color:#fff;transform-origin:0 0;transform:scaleX(0.9735);-webkit-text-stroke:0">平ｵｯｽﾞ</div>
<div class="a" style="left:536.40px;top:149.00px;width:1.20px;height:14.10px;background:#002010"></div>
<div id="f74" class="t" style="left:539.60px;top:155.80px;line-height:0;font-size:11.5px;color:#fff;transform-origin:0 0;transform:scaleX(0.9829);-webkit-text-stroke:0">単平均</div>
<div class="a" style="left:576.00px;top:149.00px;width:1.20px;height:14.10px;background:#002010"></div>
<div id="f75" class="t" style="left:578.50px;top:155.80px;line-height:0;font-size:11.5px;color:#fff;transform-origin:0 0;transform:scaleX(1.0086);-webkit-text-stroke:0">複平均</div>
<div class="a" style="left:615.00px;top:149.00px;width:1.20px;height:14.10px;background:#002010"></div>
<div id="f76" class="t" style="left:617.40px;top:155.80px;line-height:0;font-size:11.5px;color:#fff;transform-origin:0 0;transform:scaleX(0.9533);-webkit-text-stroke:0">ﾏｰｸ数</div>
<div class="a" style="left:648.30px;top:149.00px;width:1.20px;height:14.10px;background:#002010"></div>
<div id="f77" class="t" style="left:657.60px;top:156.30px;line-height:0;font-size:11.5px;color:#fff;transform-origin:0 0;transform:scaleX(0.9333);-webkit-text-stroke:0">ﾏｰｸ率</div>
<div class="a" style="left:686.80px;top:149.00px;width:1.20px;height:14.10px;background:#002010"></div>
<div id="f78" class="t" style="left:689.93px;top:156.30px;line-height:0;font-size:11.5px;color:#fff;transform-origin:0 0;transform:scaleX(0.9576);-webkit-text-stroke:0">２着率</div>
<div class="a" style="left:726.30px;top:149.00px;width:1.20px;height:14.10px;background:#002010"></div>
<div id="f79" class="t" style="left:729.69px;top:156.30px;line-height:0;font-size:11.5px;color:#fff;transform-origin:0 0;transform:scaleX(0.9529);-webkit-text-stroke:0">３着率</div>
<div class="a" style="left:766.00px;top:149.00px;width:1.20px;height:14.10px;background:#002010"></div>
<div id="f80" class="t" style="left:769.00px;top:155.80px;line-height:0;font-size:11.5px;color:#fff;transform-origin:0 0;transform:scaleX(0.9313);-webkit-text-stroke:0">平タイム</div>
<div class="a" style="left:816.40px;top:149.00px;width:1.20px;height:14.10px;background:#002010"></div>
<div id="f81" class="t" style="left:820.00px;top:155.80px;line-height:0;font-size:11.5px;color:#fff;transform-origin:0 0;transform:scaleX(0.9304);-webkit-text-stroke:0">平1Fﾀｲﾑ</div>
<div class="a" style="left:861.00px;top:149.00px;width:1.20px;height:14.10px;background:#002010"></div>
<div id="f82" class="t" style="left:865.20px;top:156.30px;line-height:0;font-size:11.5px;color:#fff;transform-origin:0 0;transform:scaleX(0.9111);-webkit-text-stroke:0">平速度</div>
<div class="a" style="left:906.70px;top:149.00px;width:1.20px;height:14.10px;background:#002010"></div>
<div class="a" style="left:4.00px;top:161.60px;width:903.70px;height:1.40px;background:#001a0c"></div>
<div class="a" style="left:31.00px;top:162.60px;width:876.70px;height:510.00px;background:#ffffe0"></div>
<div class="a" style="left:31.00px;top:176.07px;width:876.70px;height:1.30px;background:#d4d4c8"></div>
<div class="a" style="left:31.00px;top:190.23px;width:876.70px;height:1.30px;background:#d4d4c8"></div>
<div class="a" style="left:31.00px;top:204.40px;width:876.70px;height:1.30px;background:#d4d4c8"></div>
<div class="a" style="left:31.00px;top:218.57px;width:876.70px;height:1.30px;background:#d4d4c8"></div>
<div class="a" style="left:31.00px;top:232.73px;width:876.70px;height:1.30px;background:#d4d4c8"></div>
<div class="a" style="left:31.00px;top:246.90px;width:876.70px;height:1.30px;background:#d4d4c8"></div>
<div class="a" style="left:31.00px;top:261.07px;width:876.70px;height:1.30px;background:#d4d4c8"></div>
<div class="a" style="left:31.00px;top:275.23px;width:876.70px;height:1.30px;background:#d4d4c8"></div>
<div class="a" style="left:31.00px;top:289.40px;width:876.70px;height:1.30px;background:#d4d4c8"></div>
<div class="a" style="left:31.00px;top:303.57px;width:876.70px;height:1.30px;background:#d4d4c8"></div>
<div class="a" style="left:31.00px;top:317.73px;width:876.70px;height:1.30px;background:#d4d4c8"></div>
<div class="a" style="left:31.00px;top:331.90px;width:876.70px;height:1.30px;background:#d4d4c8"></div>
<div class="a" style="left:31.00px;top:346.07px;width:876.70px;height:1.30px;background:#d4d4c8"></div>
<div class="a" style="left:31.00px;top:360.23px;width:876.70px;height:1.30px;background:#d4d4c8"></div>
<div class="a" style="left:31.00px;top:374.40px;width:876.70px;height:1.30px;background:#d4d4c8"></div>
<div class="a" style="left:31.00px;top:388.57px;width:876.70px;height:1.30px;background:#d4d4c8"></div>
<div class="a" style="left:31.00px;top:402.73px;width:876.70px;height:1.30px;background:#d4d4c8"></div>
<div class="a" style="left:31.00px;top:416.90px;width:876.70px;height:1.30px;background:#d4d4c8"></div>
<div class="a" style="left:31.00px;top:431.07px;width:876.70px;height:1.30px;background:#d4d4c8"></div>
<div class="a" style="left:31.00px;top:445.23px;width:876.70px;height:1.30px;background:#d4d4c8"></div>
<div class="a" style="left:31.00px;top:459.40px;width:876.70px;height:1.30px;background:#d4d4c8"></div>
<div class="a" style="left:31.00px;top:473.57px;width:876.70px;height:1.30px;background:#d4d4c8"></div>
<div class="a" style="left:31.00px;top:487.73px;width:876.70px;height:1.30px;background:#d4d4c8"></div>
<div class="a" style="left:31.00px;top:501.90px;width:876.70px;height:1.30px;background:#d4d4c8"></div>
<div class="a" style="left:31.00px;top:516.07px;width:876.70px;height:1.30px;background:#d4d4c8"></div>
<div class="a" style="left:31.00px;top:530.23px;width:876.70px;height:1.30px;background:#d4d4c8"></div>
<div class="a" style="left:31.00px;top:544.40px;width:876.70px;height:1.30px;background:#d4d4c8"></div>
<div class="a" style="left:31.00px;top:558.57px;width:876.70px;height:1.30px;background:#d4d4c8"></div>
<div class="a" style="left:31.00px;top:572.73px;width:876.70px;height:1.30px;background:#d4d4c8"></div>
<div class="a" style="left:31.00px;top:586.90px;width:876.70px;height:1.30px;background:#d4d4c8"></div>
<div class="a" style="left:31.00px;top:601.07px;width:876.70px;height:1.30px;background:#d4d4c8"></div>
<div class="a" style="left:31.00px;top:615.23px;width:876.70px;height:1.30px;background:#d4d4c8"></div>
<div class="a" style="left:31.00px;top:629.40px;width:876.70px;height:1.30px;background:#d4d4c8"></div>
<div class="a" style="left:31.00px;top:643.57px;width:876.70px;height:1.30px;background:#d4d4c8"></div>
<div class="a" style="left:31.00px;top:657.73px;width:876.70px;height:1.30px;background:#d4d4c8"></div>
<div class="a" style="left:31.00px;top:671.90px;width:876.70px;height:1.30px;background:#d4d4c8"></div>
<div class="a" style="left:81.30px;top:162.60px;width:1.30px;height:510.00px;background:#d4d4c8"></div>
<div class="a" style="left:172.90px;top:162.60px;width:1.30px;height:510.00px;background:#d4d4c8"></div>
<div class="a" style="left:211.70px;top:162.60px;width:1.30px;height:510.00px;background:#d4d4c8"></div>
<div class="a" style="left:251.30px;top:162.60px;width:1.30px;height:510.00px;background:#d4d4c8"></div>
<div class="a" style="left:290.80px;top:162.60px;width:1.30px;height:510.00px;background:#d4d4c8"></div>
<div class="a" style="left:329.30px;top:162.60px;width:1.30px;height:510.00px;background:#d4d4c8"></div>
<div class="a" style="left:368.60px;top:162.60px;width:1.30px;height:510.00px;background:#d4d4c8"></div>
<div class="a" style="left:419.60px;top:162.60px;width:1.30px;height:510.00px;background:#d4d4c8"></div>
<div class="a" style="left:458.30px;top:162.60px;width:1.30px;height:510.00px;background:#d4d4c8"></div>
<div class="a" style="left:497.30px;top:162.60px;width:1.30px;height:510.00px;background:#d4d4c8"></div>
<div class="a" style="left:536.70px;top:162.60px;width:1.30px;height:510.00px;background:#d4d4c8"></div>
<div class="a" style="left:576.30px;top:162.60px;width:1.30px;height:510.00px;background:#d4d4c8"></div>
<div class="a" style="left:615.30px;top:162.60px;width:1.30px;height:510.00px;background:#d4d4c8"></div>
<div class="a" style="left:648.60px;top:162.60px;width:1.30px;height:510.00px;background:#d4d4c8"></div>
<div class="a" style="left:687.10px;top:162.60px;width:1.30px;height:510.00px;background:#d4d4c8"></div>
<div class="a" style="left:726.60px;top:162.60px;width:1.30px;height:510.00px;background:#d4d4c8"></div>
<div class="a" style="left:766.30px;top:162.60px;width:1.30px;height:510.00px;background:#d4d4c8"></div>
<div class="a" style="left:816.70px;top:162.60px;width:1.30px;height:510.00px;background:#d4d4c8"></div>
<div class="a" style="left:861.30px;top:162.60px;width:1.30px;height:510.00px;background:#d4d4c8"></div>
<div class="a" style="left:907.00px;top:162.60px;width:1.30px;height:510.00px;background:#d4d4c8"></div>
<div class="a" style="left:4.00px;top:162.60px;width:27.00px;height:510.00px;background:#0000ff"></div>
<div class="m mc" style="left:-34.50px;top:164.40px;color:#fff">1</div>
<div class="a" style="left:31.60px;top:163.20px;width:49.80px;height:12.97px;background:#00ffff"></div>
<div class="nm" style="left:32.30px;top:163.40px;color:#ff0000">ヒューイ</div>
<div class="m ml" style="left:84.70px;top:163.60px"> 1- 1- 1- 0/ 3</div>
<div class="m mr" style="right:1389.30px;top:163.60px;color:#a02828">33.3%</div>
<div class="m mr" style="right:1349.80px;top:163.60px;color:#2424ff">66.7%</div>
<div class="m mr" style="right:1311.00px;top:163.60px">100.0%</div>
<div class="m mr" style="right:1272.60px;top:163.60px;color:#229922">143</div>
<div class="m mr" style="right:1233.40px;top:163.60px">126</div>
<div class="m mr" style="right:1188.30px;top:163.60px">103.6</div>
<div class="m mr" style="right:1144.10px;top:163.60px">2.0<span class="j">着</span></div>
<div class="m mr" style="right:1105.30px;top:163.60px">2.3<span class="j">人</span></div>
<div class="m mr" style="right:1065.00px;top:163.60px">3.4</div>
<div class="m mr" style="right:1025.60px;top:163.60px;color:#229922">430</div>
<div class="m mr" style="right:986.60px;top:163.60px">127</div>
<div class="m mr" style="right:953.60px;top:163.60px">0</div>
<div class="m mr" style="right:913.30px;top:163.60px">0.0%</div>
<div class="m mr" style="right:874.50px;top:163.60px;color:#2424ff">33.3%</div>
<div class="m mr" style="right:835.00px;top:163.60px;color:#229922">33.3%</div>
<div class="m mr" style="right:790.80px;top:163.60px">124.77</div>
<div class="m mr" style="right:745.60px;top:163.60px">12.07</div>
<div class="m mr" style="right:700.40px;top:163.60px">59.63</div>
<div class="a" style="left:4.00px;top:176.07px;width:27.60px;height:1.40px;background:#000018"></div>
<div class="m mc" style="left:-34.50px;top:178.57px;color:#fff">2</div>
<div class="a" style="left:31.60px;top:177.37px;width:49.80px;height:12.97px;background:#ffff00"></div>
<div class="nm" style="left:32.30px;top:177.57px;color:#000000">柴田大知</div>
<div class="m ml" style="left:84.70px;top:177.77px"> 2- 1- 0- 1/ 4</div>
<div class="m mr" style="right:1389.30px;top:177.77px;color:#a02828">50.0%</div>
<div class="m mr" style="right:1349.80px;top:177.77px;color:#2424ff">75.0%</div>
<div class="m mr" style="right:1311.00px;top:177.77px">75.0%</div>
<div class="m mr" style="right:1272.60px;top:177.77px;color:#229922">330</div>
<div class="m mr" style="right:1233.40px;top:177.77px">180</div>
<div class="m mr" style="right:1188.30px;top:177.77px">292.0</div>
<div class="m mr" style="right:1144.10px;top:177.77px">3.5<span class="j">着</span></div>
<div class="m mr" style="right:1105.30px;top:177.77px">2.3<span class="j">人</span></div>
<div class="m mr" style="right:1065.00px;top:177.77px">6.1</div>
<div class="m mr" style="right:1025.60px;top:177.77px;color:#229922">660</div>
<div class="m mr" style="right:986.60px;top:177.77px">240</div>
<div class="m mr" style="right:953.60px;top:177.77px">0</div>
<div class="m mr" style="right:913.30px;top:177.77px">0.0%</div>
<div class="m mr" style="right:874.50px;top:177.77px;color:#2424ff">25.0%</div>
<div class="m mr" style="right:835.00px;top:177.77px;color:#229922">0.0%</div>
<div class="m mr" style="right:790.80px;top:177.77px">94.28</div>
<div class="m mr" style="right:745.60px;top:177.77px">11.78</div>
<div class="m mr" style="right:700.40px;top:177.77px">61.10</div>
<div class="a" style="left:4.00px;top:190.23px;width:27.60px;height:1.40px;background:#000018"></div>
<div class="m mc" style="left:-34.50px;top:192.73px;color:#fff">3</div>
<div class="a" style="left:31.60px;top:191.53px;width:49.80px;height:12.97px;background:#00ffff"></div>
<div class="nm" style="left:32.30px;top:191.73px;color:#0000ff">北村友一</div>
<div class="m ml" style="left:84.70px;top:191.93px"> 4- 3- 4- 5/16</div>
<div class="m mr" style="right:1389.30px;top:191.93px;color:#a02828">25.0%</div>
<div class="m mr" style="right:1349.80px;top:191.93px;color:#2424ff">43.8%</div>
<div class="m mr" style="right:1311.00px;top:191.93px">68.8%</div>
<div class="m mr" style="right:1272.60px;top:191.93px;color:#229922">91</div>
<div class="m mr" style="right:1233.40px;top:191.93px">120</div>
<div class="m mr" style="right:1188.30px;top:191.93px">92.3</div>
<div class="m mr" style="right:1144.10px;top:191.93px">3.4<span class="j">着</span></div>
<div class="m mr" style="right:1105.30px;top:191.93px">1.9<span class="j">人</span></div>
<div class="m mr" style="right:1065.00px;top:191.93px">4.6</div>
<div class="m mr" style="right:1025.60px;top:191.93px;color:#229922">365</div>
<div class="m mr" style="right:986.60px;top:191.93px">175</div>
<div class="m mr" style="right:953.60px;top:191.93px">0</div>
<div class="m mr" style="right:913.30px;top:191.93px">0.0%</div>
<div class="m mr" style="right:874.50px;top:191.93px;color:#2424ff">18.8%</div>
<div class="m mr" style="right:835.00px;top:191.93px;color:#229922">25.0%</div>
<div class="m mr" style="right:790.80px;top:191.93px">108.81</div>
<div class="m mr" style="right:745.60px;top:191.93px">12.01</div>
<div class="m mr" style="right:700.40px;top:191.93px">59.97</div>
<div class="a" style="left:4.00px;top:204.40px;width:27.60px;height:1.40px;background:#000018"></div>
<div class="m mc" style="left:-34.50px;top:206.90px;color:#fff">4</div>
<div class="a" style="left:31.60px;top:205.70px;width:49.80px;height:12.97px;background:#00ffff"></div>
<div class="nm" style="left:32.30px;top:205.90px;color:#0000ff">福永祐一</div>
<div class="m ml" style="left:84.70px;top:206.10px"> 8- 4- 5- 8/25</div>
<div class="m mr" style="right:1389.30px;top:206.10px;color:#a02828">32.0%</div>
<div class="m mr" style="right:1349.80px;top:206.10px;color:#2424ff">48.0%</div>
<div class="m mr" style="right:1311.00px;top:206.10px">68.0%</div>
<div class="m mr" style="right:1272.60px;top:206.10px;color:#229922">72</div>
<div class="m mr" style="right:1233.40px;top:206.10px">100</div>
<div class="m mr" style="right:1188.30px;top:206.10px">88.3</div>
<div class="m mr" style="right:1144.10px;top:206.10px">3.8<span class="j">着</span></div>
<div class="m mr" style="right:1105.30px;top:206.10px">1.8<span class="j">人</span></div>
<div class="m mr" style="right:1065.00px;top:206.10px">4.0</div>
<div class="m mr" style="right:1025.60px;top:206.10px;color:#229922">225</div>
<div class="m mr" style="right:986.60px;top:206.10px">148</div>
<div class="m mr" style="right:953.60px;top:206.10px">0</div>
<div class="m mr" style="right:913.30px;top:206.10px">0.0%</div>
<div class="m mr" style="right:874.50px;top:206.10px;color:#2424ff">16.0%</div>
<div class="m mr" style="right:835.00px;top:206.10px;color:#229922">20.0%</div>
<div class="m mr" style="right:790.80px;top:206.10px">109.30</div>
<div class="m mr" style="right:745.60px;top:206.10px">11.88</div>
<div class="m mr" style="right:700.40px;top:206.10px">60.60</div>
<div class="a" style="left:4.00px;top:218.57px;width:27.60px;height:1.40px;background:#000018"></div>
<div class="m mc" style="left:-34.50px;top:221.07px;color:#fff">5</div>
<div class="a" style="left:31.60px;top:219.87px;width:49.80px;height:12.97px;background:#00ff00"></div>
<div class="nm" style="left:32.30px;top:220.07px;color:#000000">横山典弘</div>
<div class="m ml" style="left:84.70px;top:220.27px"> 5- 2- 3- 5/15</div>
<div class="m mr" style="right:1389.30px;top:220.27px;color:#a02828">33.3%</div>
<div class="m mr" style="right:1349.80px;top:220.27px;color:#2424ff">46.7%</div>
<div class="m mr" style="right:1311.00px;top:220.27px">66.7%</div>
<div class="m mr" style="right:1272.60px;top:220.27px;color:#229922">129</div>
<div class="m mr" style="right:1233.40px;top:220.27px">106</div>
<div class="m mr" style="right:1188.30px;top:220.27px">126.4</div>
<div class="m mr" style="right:1144.10px;top:220.27px">4.1<span class="j">着</span></div>
<div class="m mr" style="right:1105.30px;top:220.27px">1.7<span class="j">人</span></div>
<div class="m mr" style="right:1065.00px;top:220.27px">4.0</div>
<div class="m mr" style="right:1025.60px;top:220.27px;color:#229922">388</div>
<div class="m mr" style="right:986.60px;top:220.27px">159</div>
<div class="m mr" style="right:953.60px;top:220.27px">0</div>
<div class="m mr" style="right:913.30px;top:220.27px">0.0%</div>
<div class="m mr" style="right:874.50px;top:220.27px;color:#2424ff">13.3%</div>
<div class="m mr" style="right:835.00px;top:220.27px;color:#229922">20.0%</div>
<div class="m mr" style="right:790.80px;top:220.27px">116.83</div>
<div class="m mr" style="right:745.60px;top:220.27px">12.04</div>
<div class="m mr" style="right:700.40px;top:220.27px">59.78</div>
<div class="a" style="left:4.00px;top:232.73px;width:27.60px;height:1.40px;background:#000018"></div>
<div class="m mc" style="left:-34.50px;top:235.23px;color:#fff">6</div>
<div class="a" style="left:31.60px;top:234.03px;width:49.80px;height:12.97px;background:#ffff00"></div>
<div class="nm" style="left:32.30px;top:234.23px;color:#0000ff">岩田康誠</div>
<div class="m ml" style="left:84.70px;top:234.43px"> 1- 0- 3- 2/ 6</div>
<div class="m mr" style="right:1389.30px;top:234.43px;color:#a02828">16.7%</div>
<div class="m mr" style="right:1349.80px;top:234.43px;color:#2424ff">16.7%</div>
<div class="m mr" style="right:1311.00px;top:234.43px">66.7%</div>
<div class="m mr" style="right:1272.60px;top:234.43px;color:#229922">98</div>
<div class="m mr" style="right:1233.40px;top:234.43px">125</div>
<div class="m mr" style="right:1188.30px;top:234.43px">68.2</div>
<div class="m mr" style="right:1144.10px;top:234.43px">3.3<span class="j">着</span></div>
<div class="m mr" style="right:1105.30px;top:234.43px">2.2<span class="j">人</span></div>
<div class="m mr" style="right:1065.00px;top:234.43px">4.8</div>
<div class="m mr" style="right:1025.60px;top:234.43px;color:#229922">590</div>
<div class="m mr" style="right:986.60px;top:234.43px">188</div>
<div class="m mr" style="right:953.60px;top:234.43px">0</div>
<div class="m mr" style="right:913.30px;top:234.43px">0.0%</div>
<div class="m mr" style="right:874.50px;top:234.43px;color:#2424ff">0.0%</div>
<div class="m mr" style="right:835.00px;top:234.43px;color:#229922">50.0%</div>
<div class="m mr" style="right:790.80px;top:234.43px">133.25</div>
<div class="m mr" style="right:745.60px;top:234.43px">12.11</div>
<div class="m mr" style="right:700.40px;top:234.43px">59.44</div>
<div class="a" style="left:4.00px;top:246.90px;width:27.60px;height:1.40px;background:#000018"></div>
<div class="m mc" style="left:-34.50px;top:249.40px;color:#fff">7</div>
<div class="a" style="left:31.60px;top:248.20px;width:49.80px;height:12.97px;background:#a6caf0"></div>
<div class="nm" style="left:32.30px;top:248.40px;color:#000000">津村明秀</div>
<div class="m ml" style="left:84.70px;top:248.60px"> 0- 2- 0- 1/ 3</div>
<div class="m mr" style="right:1389.30px;top:248.60px;color:#a02828">0.0%</div>
<div class="m mr" style="right:1349.80px;top:248.60px;color:#2424ff">66.7%</div>
<div class="m mr" style="right:1311.00px;top:248.60px">66.7%</div>
<div class="m mr" style="right:1272.60px;top:248.60px;color:#229922">0</div>
<div class="m mr" style="right:1233.40px;top:248.60px">86</div>
<div class="m mr" style="right:1188.30px;top:248.60px">0.0</div>
<div class="m mr" style="right:1144.10px;top:248.60px">3.7<span class="j">着</span></div>
<div class="m mr" style="right:1105.30px;top:248.60px">2.0<span class="j">人</span></div>
<div class="m mr" style="right:1065.00px;top:248.60px">3.8</div>
<div class="m mr" style="right:986.60px;top:248.60px">130</div>
<div class="m mr" style="right:953.60px;top:248.60px">0</div>
<div class="m mr" style="right:913.30px;top:248.60px">0.0%</div>
<div class="m mr" style="right:874.50px;top:248.60px;color:#2424ff">66.7%</div>
<div class="m mr" style="right:835.00px;top:248.60px;color:#229922">0.0%</div>
<div class="m mr" style="right:790.80px;top:248.60px">126.80</div>
<div class="m mr" style="right:745.60px;top:248.60px">12.27</div>
<div class="m mr" style="right:700.40px;top:248.60px">58.68</div>
<div class="a" style="left:4.00px;top:261.07px;width:27.60px;height:1.40px;background:#000018"></div>
<div class="m mc" style="left:-34.50px;top:263.57px;color:#fff">8</div>
<div class="a" style="left:31.60px;top:262.37px;width:49.80px;height:12.97px;background:#ffff00"></div>
<div class="nm" style="left:32.30px;top:262.57px;color:#0000ff">団野大成</div>
<div class="m ml" style="left:84.70px;top:262.77px"> 0- 0- 2- 1/ 3</div>
<div class="m mr" style="right:1389.30px;top:262.77px;color:#a02828">0.0%</div>
<div class="m mr" style="right:1349.80px;top:262.77px;color:#2424ff">0.0%</div>
<div class="m mr" style="right:1311.00px;top:262.77px">66.7%</div>
<div class="m mr" style="right:1272.60px;top:262.77px;color:#229922">0</div>
<div class="m mr" style="right:1233.40px;top:262.77px">210</div>
<div class="m mr" style="right:1188.30px;top:262.77px">0.0</div>
<div class="m mr" style="right:1144.10px;top:262.77px">5.0<span class="j">着</span></div>
<div class="m mr" style="right:1105.30px;top:262.77px">3.0<span class="j">人</span></div>
<div class="m mr" style="right:1065.00px;top:262.77px">8.9</div>
<div class="m mr" style="right:986.60px;top:262.77px">315</div>
<div class="m mr" style="right:953.60px;top:262.77px">0</div>
<div class="m mr" style="right:913.30px;top:262.77px">0.0%</div>
<div class="m mr" style="right:874.50px;top:262.77px;color:#2424ff">0.0%</div>
<div class="m mr" style="right:835.00px;top:262.77px;color:#229922">66.7%</div>
<div class="m mr" style="right:790.80px;top:262.77px">90.60</div>
<div class="m mr" style="right:745.60px;top:262.77px">11.82</div>
<div class="m mr" style="right:700.40px;top:262.77px">60.93</div>
<div class="a" style="left:4.00px;top:275.23px;width:27.60px;height:1.40px;background:#000018"></div>
<div class="m mc" style="left:-34.50px;top:277.73px;color:#fff">9</div>
<div class="a" style="left:31.60px;top:276.53px;width:49.80px;height:12.97px;background:#00ff00"></div>
<div class="nm" style="left:32.30px;top:276.73px;color:#0000ff">松山弘平</div>
<div class="m ml" style="left:84.70px;top:276.93px"> 8- 1- 2- 6/17</div>
<div class="m mr" style="right:1389.30px;top:276.93px;color:#a02828">47.1%</div>
<div class="m mr" style="right:1349.80px;top:276.93px;color:#2424ff">52.9%</div>
<div class="m mr" style="right:1311.00px;top:276.93px">64.7%</div>
<div class="m mr" style="right:1272.60px;top:276.93px;color:#229922">166</div>
<div class="m mr" style="right:1233.40px;top:276.93px">105</div>
<div class="m mr" style="right:1188.30px;top:276.93px">163.3</div>
<div class="m mr" style="right:1144.10px;top:276.93px">3.3<span class="j">着</span></div>
<div class="m mr" style="right:1105.30px;top:276.93px">2.0<span class="j">人</span></div>
<div class="m mr" style="right:1065.00px;top:276.93px">4.2</div>
<div class="m mr" style="right:1025.60px;top:276.93px;color:#229922">354</div>
<div class="m mr" style="right:986.60px;top:276.93px">163</div>
<div class="m mr" style="right:953.60px;top:276.93px">0</div>
<div class="m mr" style="right:913.30px;top:276.93px">0.0%</div>
<div class="m mr" style="right:874.50px;top:276.93px;color:#2424ff">5.9%</div>
<div class="m mr" style="right:835.00px;top:276.93px;color:#229922">11.8%</div>
<div class="m mr" style="right:790.80px;top:276.93px">99.88</div>
<div class="m mr" style="right:745.60px;top:276.93px">11.87</div>
<div class="m mr" style="right:700.40px;top:276.93px">60.64</div>
<div class="a" style="left:4.00px;top:289.40px;width:27.60px;height:1.40px;background:#000018"></div>
<div class="m mc" style="left:-34.50px;top:291.90px;color:#fff">10</div>
<div class="a" style="left:31.60px;top:290.70px;width:49.80px;height:12.97px;background:#a6caf0"></div>
<div class="nm" style="left:32.30px;top:290.90px;color:#000000">石橋脩</div>
<div class="m ml" style="left:84.70px;top:291.10px"> 2- 0- 1- 2/ 5</div>
<div class="m mr" style="right:1389.30px;top:291.10px;color:#a02828">40.0%</div>
<div class="m mr" style="right:1349.80px;top:291.10px;color:#2424ff">40.0%</div>
<div class="m mr" style="right:1311.00px;top:291.10px">60.0%</div>
<div class="m mr" style="right:1272.60px;top:291.10px;color:#229922">152</div>
<div class="m mr" style="right:1233.40px;top:291.10px">102</div>
<div class="m mr" style="right:1188.30px;top:291.10px">173.2</div>
<div class="m mr" style="right:1144.10px;top:291.10px">5.0<span class="j">着</span></div>
<div class="m mr" style="right:1105.30px;top:291.10px">1.8<span class="j">人</span></div>
<div class="m mr" style="right:1065.00px;top:291.10px">4.5</div>
<div class="m mr" style="right:1025.60px;top:291.10px;color:#229922">380</div>
<div class="m mr" style="right:986.60px;top:291.10px">170</div>
<div class="m mr" style="right:953.60px;top:291.10px">0</div>
<div class="m mr" style="right:913.30px;top:291.10px">0.0%</div>
<div class="m mr" style="right:874.50px;top:291.10px;color:#2424ff">0.0%</div>
<div class="m mr" style="right:835.00px;top:291.10px;color:#229922">20.0%</div>
<div class="m mr" style="right:790.80px;top:291.10px">97.10</div>
<div class="m mr" style="right:745.60px;top:291.10px">11.84</div>
<div class="m mr" style="right:700.40px;top:291.10px">60.80</div>
<div class="a" style="left:4.00px;top:303.57px;width:27.60px;height:1.40px;background:#000018"></div>
<div class="m mc" style="left:-34.50px;top:306.07px;color:#fff">11</div>
<div class="a" style="left:31.60px;top:304.87px;width:49.80px;height:12.97px;background:#a6caf0"></div>
<div class="nm" style="left:32.30px;top:305.07px;color:#000000">三浦皇成</div>
<div class="m ml" style="left:84.70px;top:305.27px"> 1- 0- 2- 2/ 5</div>
<div class="m mr" style="right:1389.30px;top:305.27px;color:#a02828">20.0%</div>
<div class="m mr" style="right:1349.80px;top:305.27px;color:#2424ff">20.0%</div>
<div class="m mr" style="right:1311.00px;top:305.27px">60.0%</div>
<div class="m mr" style="right:1272.60px;top:305.27px;color:#229922">60</div>
<div class="m mr" style="right:1233.40px;top:305.27px">90</div>
<div class="m mr" style="right:1188.30px;top:305.27px">74.4</div>
<div class="m mr" style="right:1144.10px;top:305.27px">6.2<span class="j">着</span></div>
<div class="m mr" style="right:1105.30px;top:305.27px">2.0<span class="j">人</span></div>
<div class="m mr" style="right:1065.00px;top:305.27px">3.8</div>
<div class="m mr" style="right:1025.60px;top:305.27px;color:#229922">300</div>
<div class="m mr" style="right:986.60px;top:305.27px">150</div>
<div class="m mr" style="right:953.60px;top:305.27px">0</div>
<div class="m mr" style="right:913.30px;top:305.27px">0.0%</div>
<div class="m mr" style="right:874.50px;top:305.27px;color:#2424ff">0.0%</div>
<div class="m mr" style="right:835.00px;top:305.27px;color:#229922">40.0%</div>
<div class="m mr" style="right:790.80px;top:305.27px">82.50</div>
<div class="m mr" style="right:745.60px;top:305.27px">11.79</div>
<div class="m mr" style="right:700.40px;top:305.27px">61.09</div>
<div class="a" style="left:4.00px;top:317.73px;width:27.60px;height:1.40px;background:#000018"></div>
<div class="m mc" style="left:-34.50px;top:320.23px;color:#fff">12</div>
<div class="a" style="left:31.60px;top:319.03px;width:49.80px;height:12.97px;background:#a6caf0"></div>
<div class="nm" style="left:32.30px;top:319.23px;color:#0000ff">岩田望来</div>
<div class="m ml" style="left:84.70px;top:319.43px"> 0- 1- 2- 2/ 5</div>
<div class="m mr" style="right:1389.30px;top:319.43px;color:#a02828">0.0%</div>
<div class="m mr" style="right:1349.80px;top:319.43px;color:#2424ff">20.0%</div>
<div class="m mr" style="right:1311.00px;top:319.43px">60.0%</div>
<div class="m mr" style="right:1272.60px;top:319.43px;color:#229922">0</div>
<div class="m mr" style="right:1233.40px;top:319.43px">106</div>
<div class="m mr" style="right:1188.30px;top:319.43px">0.0</div>
<div class="m mr" style="right:1144.10px;top:319.43px">3.6<span class="j">着</span></div>
<div class="m mr" style="right:1105.30px;top:319.43px">2.4<span class="j">人</span></div>
<div class="m mr" style="right:1065.00px;top:319.43px">5.3</div>
<div class="m mr" style="right:986.60px;top:319.43px">177</div>
<div class="m mr" style="right:953.60px;top:319.43px">0</div>
<div class="m mr" style="right:913.30px;top:319.43px">0.0%</div>
<div class="m mr" style="right:874.50px;top:319.43px;color:#2424ff">20.0%</div>
<div class="m mr" style="right:835.00px;top:319.43px;color:#229922">40.0%</div>
<div class="m mr" style="right:790.80px;top:319.43px">96.54</div>
<div class="m mr" style="right:745.60px;top:319.43px">11.77</div>
<div class="m mr" style="right:700.40px;top:319.43px">61.16</div>
<div class="a" style="left:4.00px;top:331.90px;width:27.60px;height:1.40px;background:#000018"></div>
<div class="m mc" style="left:-34.50px;top:334.40px;color:#fff">13</div>
<div class="a" style="left:31.60px;top:333.20px;width:49.80px;height:12.97px;background:#ffff00"></div>
<div class="nm" style="left:32.30px;top:333.40px;color:#0000ff">池添謙一</div>
<div class="m ml" style="left:84.70px;top:333.60px"> 3- 7- 0- 7/17</div>
<div class="m mr" style="right:1389.30px;top:333.60px;color:#a02828">17.6%</div>
<div class="m mr" style="right:1349.80px;top:333.60px;color:#2424ff">58.8%</div>
<div class="m mr" style="right:1311.00px;top:333.60px">58.8%</div>
<div class="m mr" style="right:1272.60px;top:333.60px;color:#229922">137</div>
<div class="m mr" style="right:1233.40px;top:333.60px">120</div>
<div class="m mr" style="right:1188.30px;top:333.60px">84.0</div>
<div class="m mr" style="right:1144.10px;top:333.60px">4.6<span class="j">着</span></div>
<div class="m mr" style="right:1105.30px;top:333.60px">2.1<span class="j">人</span></div>
<div class="m mr" style="right:1065.00px;top:333.60px">6.6</div>
<div class="m mr" style="right:1025.60px;top:333.60px;color:#229922">777</div>
<div class="m mr" style="right:986.60px;top:333.60px">204</div>
<div class="m mr" style="right:953.60px;top:333.60px">0</div>
<div class="m mr" style="right:913.30px;top:333.60px">0.0%</div>
<div class="m mr" style="right:874.50px;top:333.60px;color:#2424ff">41.2%</div>
<div class="m mr" style="right:835.00px;top:333.60px;color:#229922">0.0%</div>
<div class="m mr" style="right:790.80px;top:333.60px">122.21</div>
<div class="m mr" style="right:745.60px;top:333.60px">12.11</div>
<div class="m mr" style="right:700.40px;top:333.60px">59.43</div>
<div class="a" style="left:4.00px;top:346.07px;width:27.60px;height:1.40px;background:#000018"></div>
<div class="m mc" style="left:-34.50px;top:348.57px;color:#fff">14</div>
<div class="a" style="left:31.60px;top:347.37px;width:49.80px;height:12.97px;background:#00ffff"></div>
<div class="nm" style="left:32.30px;top:347.57px;color:#ff0000">レーン</div>
<div class="m ml" style="left:84.70px;top:347.77px"> 2- 3- 1- 5/11</div>
<div class="m mr" style="right:1389.30px;top:347.77px;color:#a02828">18.2%</div>
<div class="m mr" style="right:1349.80px;top:347.77px;color:#2424ff">45.5%</div>
<div class="m mr" style="right:1311.00px;top:347.77px">54.5%</div>
<div class="m mr" style="right:1272.60px;top:347.77px;color:#229922">62</div>
<div class="m mr" style="right:1233.40px;top:347.77px">86</div>
<div class="m mr" style="right:1188.30px;top:347.77px">72.2</div>
<div class="m mr" style="right:1144.10px;top:347.77px">5.0<span class="j">着</span></div>
<div class="m mr" style="right:1105.30px;top:347.77px">1.7<span class="j">人</span></div>
<div class="m mr" style="right:1065.00px;top:347.77px">4.5</div>
<div class="m mr" style="right:1025.60px;top:347.77px;color:#229922">345</div>
<div class="m mr" style="right:986.60px;top:347.77px">158</div>
<div class="m mr" style="right:953.60px;top:347.77px">0</div>
<div class="m mr" style="right:913.30px;top:347.77px">0.0%</div>
<div class="m mr" style="right:874.50px;top:347.77px;color:#2424ff">27.3%</div>
<div class="m mr" style="right:835.00px;top:347.77px;color:#229922">9.1%</div>
<div class="m mr" style="right:790.80px;top:347.77px">116.47</div>
<div class="m mr" style="right:745.60px;top:347.77px">11.97</div>
<div class="m mr" style="right:700.40px;top:347.77px">60.13</div>
<div class="a" style="left:4.00px;top:360.23px;width:27.60px;height:1.40px;background:#000018"></div>
<div class="m mc" style="left:-34.50px;top:362.73px;color:#fff">15</div>
<div class="a" style="left:31.60px;top:361.53px;width:49.80px;height:12.97px;background:#00ffff"></div>
<div class="nm" style="left:32.30px;top:361.73px;color:#0000ff">ルメール</div>
<div class="m ml" style="left:84.70px;top:361.93px">17- 7- 4-26/54</div>
<div class="m mr" style="right:1389.30px;top:361.93px;color:#a02828">31.5%</div>
<div class="m mr" style="right:1349.80px;top:361.93px;color:#2424ff">44.4%</div>
<div class="m mr" style="right:1311.00px;top:361.93px">51.9%</div>
<div class="m mr" style="right:1272.60px;top:361.93px;color:#229922">97</div>
<div class="m mr" style="right:1233.40px;top:361.93px">83</div>
<div class="m mr" style="right:1188.30px;top:361.93px">93.3</div>
<div class="m mr" style="right:1144.10px;top:361.93px">4.4<span class="j">着</span></div>
<div class="m mr" style="right:1105.30px;top:361.93px">1.7<span class="j">人</span></div>
<div class="m mr" style="right:1065.00px;top:361.93px">3.9</div>
<div class="m mr" style="right:1025.60px;top:361.93px;color:#229922">309</div>
<div class="m mr" style="right:986.60px;top:361.93px">160</div>
<div class="m mr" style="right:953.60px;top:361.93px">0</div>
<div class="m mr" style="right:913.30px;top:361.93px">0.0%</div>
<div class="m mr" style="right:874.50px;top:361.93px;color:#2424ff">13.0%</div>
<div class="m mr" style="right:835.00px;top:361.93px;color:#229922">7.4%</div>
<div class="m mr" style="right:790.80px;top:361.93px">113.11</div>
<div class="m mr" style="right:745.60px;top:361.93px">12.04</div>
<div class="m mr" style="right:700.40px;top:361.93px">59.82</div>
<div class="a" style="left:4.00px;top:374.40px;width:27.60px;height:1.40px;background:#000018"></div>
<div class="m mc" style="left:-34.50px;top:376.90px;color:#fff">16</div>
<div class="a" style="left:31.60px;top:375.70px;width:49.80px;height:12.97px;background:#ffff00"></div>
<div class="nm" style="left:32.30px;top:375.90px;color:#000000">吉田隼人</div>
<div class="m ml" style="left:84.70px;top:376.10px"> 4- 0- 0- 4/ 8</div>
<div class="m mr" style="right:1389.30px;top:376.10px;color:#a02828">50.0%</div>
<div class="m mr" style="right:1349.80px;top:376.10px;color:#2424ff">50.0%</div>
<div class="m mr" style="right:1311.00px;top:376.10px">50.0%</div>
<div class="m mr" style="right:1272.60px;top:376.10px;color:#229922">213</div>
<div class="m mr" style="right:1233.40px;top:376.10px">85</div>
<div class="m mr" style="right:1188.30px;top:376.10px">239.6</div>
<div class="m mr" style="right:1144.10px;top:376.10px">3.3<span class="j">着</span></div>
<div class="m mr" style="right:1105.30px;top:376.10px">2.1<span class="j">人</span></div>
<div class="m mr" style="right:1065.00px;top:376.10px">5.6</div>
<div class="m mr" style="right:1025.60px;top:376.10px;color:#229922">428</div>
<div class="m mr" style="right:986.60px;top:376.10px">170</div>
<div class="m mr" style="right:953.60px;top:376.10px">0</div>
<div class="m mr" style="right:913.30px;top:376.10px">0.0%</div>
<div class="m mr" style="right:874.50px;top:376.10px;color:#2424ff">0.0%</div>
<div class="m mr" style="right:835.00px;top:376.10px;color:#229922">0.0%</div>
<div class="m mr" style="right:790.80px;top:376.10px">101.21</div>
<div class="m mr" style="right:745.60px;top:376.10px">11.91</div>
<div class="m mr" style="right:700.40px;top:376.10px">60.47</div>
<div class="a" style="left:4.00px;top:388.57px;width:27.60px;height:1.40px;background:#000018"></div>
<div class="m mc" style="left:-34.50px;top:391.07px;color:#fff">17</div>
<div class="a" style="left:31.60px;top:389.87px;width:49.80px;height:12.97px;background:#a6caf0"></div>
<div class="nm" style="left:32.30px;top:390.07px;color:#0000ff">松若風馬</div>
<div class="m ml" style="left:84.70px;top:390.27px"> 1- 2- 0- 3/ 6</div>
<div class="m mr" style="right:1389.30px;top:390.27px;color:#a02828">16.7%</div>
<div class="m mr" style="right:1349.80px;top:390.27px;color:#2424ff">50.0%</div>
<div class="m mr" style="right:1311.00px;top:390.27px">50.0%</div>
<div class="m mr" style="right:1272.60px;top:390.27px;color:#229922">85</div>
<div class="m mr" style="right:1233.40px;top:390.27px">96</div>
<div class="m mr" style="right:1188.30px;top:390.27px">74.9</div>
<div class="m mr" style="right:1144.10px;top:390.27px">4.7<span class="j">着</span></div>
<div class="m mr" style="right:1105.30px;top:390.27px">1.8<span class="j">人</span></div>
<div class="m mr" style="right:1065.00px;top:390.27px">4.6</div>
<div class="m mr" style="right:1025.60px;top:390.27px;color:#229922">510</div>
<div class="m mr" style="right:986.60px;top:390.27px">193</div>
<div class="m mr" style="right:953.60px;top:390.27px">0</div>
<div class="m mr" style="right:913.30px;top:390.27px">0.0%</div>
<div class="m mr" style="right:874.50px;top:390.27px;color:#2424ff">33.3%</div>
<div class="m mr" style="right:835.00px;top:390.27px;color:#229922">0.0%</div>
<div class="m mr" style="right:790.80px;top:390.27px">73.13</div>
<div class="m mr" style="right:745.60px;top:390.27px">11.55</div>
<div class="m mr" style="right:700.40px;top:390.27px">62.35</div>
<div class="a" style="left:4.00px;top:402.73px;width:27.60px;height:1.40px;background:#000018"></div>
<div class="m mc" style="left:-34.50px;top:405.23px;color:#fff">18</div>
<div class="a" style="left:31.60px;top:404.03px;width:49.80px;height:12.97px;background:#a6caf0"></div>
<div class="nm" style="left:32.30px;top:404.23px;color:#0000ff">浜中俊</div>
<div class="m ml" style="left:84.70px;top:404.43px"> 0- 1- 0- 1/ 2</div>
<div class="m mr" style="right:1389.30px;top:404.43px;color:#a02828">0.0%</div>
<div class="m mr" style="right:1349.80px;top:404.43px;color:#2424ff">50.0%</div>
<div class="m mr" style="right:1311.00px;top:404.43px">50.0%</div>
<div class="m mr" style="right:1272.60px;top:404.43px;color:#229922">0</div>
<div class="m mr" style="right:1233.40px;top:404.43px">90</div>
<div class="m mr" style="right:1188.30px;top:404.43px">0.0</div>
<div class="m mr" style="right:1144.10px;top:404.43px">3.0<span class="j">着</span></div>
<div class="m mr" style="right:1105.30px;top:404.43px">1.5<span class="j">人</span></div>
<div class="m mr" style="right:1065.00px;top:404.43px">4.3</div>
<div class="m mr" style="right:986.60px;top:404.43px">180</div>
<div class="m mr" style="right:953.60px;top:404.43px">0</div>
<div class="m mr" style="right:913.30px;top:404.43px">0.0%</div>
<div class="m mr" style="right:874.50px;top:404.43px;color:#2424ff">50.0%</div>
<div class="m mr" style="right:835.00px;top:404.43px;color:#229922">0.0%</div>
<div class="m mr" style="right:790.80px;top:404.43px">171.30</div>
<div class="m mr" style="right:745.60px;top:404.43px">12.24</div>
<div class="m mr" style="right:700.40px;top:404.43px">58.84</div>
<div class="a" style="left:4.00px;top:416.90px;width:27.60px;height:1.40px;background:#000018"></div>
<div class="m mc" style="left:-34.50px;top:419.40px;color:#fff">19</div>
<div class="a" style="left:31.60px;top:418.20px;width:49.80px;height:12.97px;background:#fbfbf2"></div>
<div class="nm" style="left:32.30px;top:418.40px;color:#0000ff">古川吉洋</div>
<div class="m ml" style="left:84.70px;top:418.60px"> 0- 1- 0- 1/ 2</div>
<div class="m mr" style="right:1389.30px;top:418.60px;color:#a02828">0.0%</div>
<div class="m mr" style="right:1349.80px;top:418.60px;color:#2424ff">50.0%</div>
<div class="m mr" style="right:1311.00px;top:418.60px">50.0%</div>
<div class="m mr" style="right:1272.60px;top:418.60px;color:#229922">0</div>
<div class="m mr" style="right:1233.40px;top:418.60px">85</div>
<div class="m mr" style="right:1188.30px;top:418.60px">0.0</div>
<div class="m mr" style="right:1144.10px;top:418.60px">4.0<span class="j">着</span></div>
<div class="m mr" style="right:1105.30px;top:418.60px">2.0<span class="j">人</span></div>
<div class="m mr" style="right:1065.00px;top:418.60px">4.3</div>
<div class="m mr" style="right:986.60px;top:418.60px">170</div>
<div class="m mr" style="right:953.60px;top:418.60px">0</div>
<div class="m mr" style="right:913.30px;top:418.60px">0.0%</div>
<div class="m mr" style="right:874.50px;top:418.60px;color:#2424ff">50.0%</div>
<div class="m mr" style="right:835.00px;top:418.60px;color:#229922">0.0%</div>
<div class="m mr" style="right:790.80px;top:418.60px">69.45</div>
<div class="m mr" style="right:745.60px;top:418.60px">11.58</div>
<div class="m mr" style="right:700.40px;top:418.60px">62.20</div>
<div class="a" style="left:4.00px;top:431.07px;width:27.60px;height:1.40px;background:#000018"></div>
<div class="m mc" style="left:-34.50px;top:433.57px;color:#fff">20</div>
<div class="a" style="left:31.60px;top:432.37px;width:49.80px;height:12.97px;background:#ffff00"></div>
<div class="nm" style="left:32.30px;top:432.57px;color:#0000ff">酒井学</div>
<div class="m ml" style="left:84.70px;top:432.77px"> 0- 1- 0- 1/ 2</div>
<div class="m mr" style="right:1389.30px;top:432.77px;color:#a02828">0.0%</div>
<div class="m mr" style="right:1349.80px;top:432.77px;color:#2424ff">50.0%</div>
<div class="m mr" style="right:1311.00px;top:432.77px">50.0%</div>
<div class="m mr" style="right:1272.60px;top:432.77px;color:#229922">0</div>
<div class="m mr" style="right:1233.40px;top:432.77px">75</div>
<div class="m mr" style="right:1188.30px;top:432.77px">0.0</div>
<div class="m mr" style="right:1144.10px;top:432.77px">7.5<span class="j">着</span></div>
<div class="m mr" style="right:1105.30px;top:432.77px">2.0<span class="j">人</span></div>
<div class="m mr" style="right:1065.00px;top:432.77px">4.8</div>
<div class="m mr" style="right:986.60px;top:432.77px">150</div>
<div class="m mr" style="right:953.60px;top:432.77px">0</div>
<div class="m mr" style="right:913.30px;top:432.77px">0.0%</div>
<div class="m mr" style="right:874.50px;top:432.77px;color:#2424ff">50.0%</div>
<div class="m mr" style="right:835.00px;top:432.77px;color:#229922">0.0%</div>
<div class="m mr" style="right:790.80px;top:432.77px">119.55</div>
<div class="m mr" style="right:745.60px;top:432.77px">11.96</div>
<div class="m mr" style="right:700.40px;top:432.77px">60.23</div>
<div class="a" style="left:4.00px;top:445.23px;width:27.60px;height:1.40px;background:#000018"></div>
<div class="m mc" style="left:-34.50px;top:447.73px;color:#fff">21</div>
<div class="a" style="left:31.60px;top:446.53px;width:49.80px;height:12.97px;background:#a6caf0"></div>
<div class="nm" style="left:32.30px;top:446.73px;color:#0000ff">鮫島克駿</div>
<div class="m ml" style="left:84.70px;top:446.93px"> 0- 1- 0- 1/ 2</div>
<div class="m mr" style="right:1389.30px;top:446.93px;color:#a02828">0.0%</div>
<div class="m mr" style="right:1349.80px;top:446.93px;color:#2424ff">50.0%</div>
<div class="m mr" style="right:1311.00px;top:446.93px">50.0%</div>
<div class="m mr" style="right:1272.60px;top:446.93px;color:#229922">0</div>
<div class="m mr" style="right:1233.40px;top:446.93px">65</div>
<div class="m mr" style="right:1188.30px;top:446.93px">0.0</div>
<div class="m mr" style="right:1144.10px;top:446.93px">4.0<span class="j">着</span></div>
<div class="m mr" style="right:1105.30px;top:446.93px">1.0<span class="j">人</span></div>
<div class="m mr" style="right:1065.00px;top:446.93px">3.6</div>
<div class="m mr" style="right:986.60px;top:446.93px">130</div>
<div class="m mr" style="right:953.60px;top:446.93px">0</div>
<div class="m mr" style="right:913.30px;top:446.93px">0.0%</div>
<div class="m mr" style="right:874.50px;top:446.93px;color:#2424ff">50.0%</div>
<div class="m mr" style="right:835.00px;top:446.93px;color:#229922">0.0%</div>
<div class="m mr" style="right:790.80px;top:446.93px">86.95</div>
<div class="m mr" style="right:745.60px;top:446.93px">11.59</div>
<div class="m mr" style="right:700.40px;top:446.93px">62.10</div>
<div class="a" style="left:4.00px;top:459.40px;width:27.60px;height:1.40px;background:#000018"></div>
<div class="m mc" style="left:-34.50px;top:461.90px;color:#fff">22</div>
<div class="a" style="left:31.60px;top:460.70px;width:49.80px;height:12.97px;background:#ffff00"></div>
<div class="nm" style="left:32.30px;top:460.90px;color:#0000ff">Ｍ．デム</div>
<div class="m ml" style="left:84.70px;top:461.10px"> 2- 6- 5-14/27</div>
<div class="m mr" style="right:1389.30px;top:461.10px;color:#a02828">7.4%</div>
<div class="m mr" style="right:1349.80px;top:461.10px;color:#2424ff">29.6%</div>
<div class="m mr" style="right:1311.00px;top:461.10px">48.1%</div>
<div class="m mr" style="right:1272.60px;top:461.10px;color:#229922">31</div>
<div class="m mr" style="right:1233.40px;top:461.10px">87</div>
<div class="m mr" style="right:1188.30px;top:461.10px">30.7</div>
<div class="m mr" style="right:1144.10px;top:461.10px">5.0<span class="j">着</span></div>
<div class="m mr" style="right:1105.30px;top:461.10px">2.3<span class="j">人</span></div>
<div class="m mr" style="right:1065.00px;top:461.10px">4.9</div>
<div class="m mr" style="right:1025.60px;top:461.10px;color:#229922">420</div>
<div class="m mr" style="right:986.60px;top:461.10px">181</div>
<div class="m mr" style="right:953.60px;top:461.10px">0</div>
<div class="m mr" style="right:913.30px;top:461.10px">0.0%</div>
<div class="m mr" style="right:874.50px;top:461.10px;color:#2424ff">22.2%</div>
<div class="m mr" style="right:835.00px;top:461.10px;color:#229922">18.5%</div>
<div class="m mr" style="right:790.80px;top:461.10px">111.63</div>
<div class="m mr" style="right:745.60px;top:461.10px">11.98</div>
<div class="m mr" style="right:700.40px;top:461.10px">60.08</div>
<div class="a" style="left:4.00px;top:473.57px;width:27.60px;height:1.40px;background:#000018"></div>
<div class="m mc" style="left:-34.50px;top:476.07px;color:#fff">23</div>
<div class="a" style="left:31.60px;top:474.87px;width:49.80px;height:12.97px;background:#00ff00"></div>
<div class="nm" style="left:32.30px;top:475.07px;color:#0000ff">川田将雅</div>
<div class="m ml" style="left:84.70px;top:475.27px"> 9- 4- 5-20/38</div>
<div class="m mr" style="right:1389.30px;top:475.27px;color:#a02828">23.7%</div>
<div class="m mr" style="right:1349.80px;top:475.27px;color:#2424ff">34.2%</div>
<div class="m mr" style="right:1311.00px;top:475.27px">47.4%</div>
<div class="m mr" style="right:1272.60px;top:475.27px;color:#229922">85</div>
<div class="m mr" style="right:1233.40px;top:475.27px">78</div>
<div class="m mr" style="right:1188.30px;top:475.27px">68.6</div>
<div class="m mr" style="right:1144.10px;top:475.27px">4.8<span class="j">着</span></div>
<div class="m mr" style="right:1105.30px;top:475.27px">1.7<span class="j">人</span></div>
<div class="m mr" style="right:1065.00px;top:475.27px">3.8</div>
<div class="m mr" style="right:1025.60px;top:475.27px;color:#229922">359</div>
<div class="m mr" style="right:986.60px;top:475.27px">165</div>
<div class="m mr" style="right:953.60px;top:475.27px">0</div>
<div class="m mr" style="right:913.30px;top:475.27px">0.0%</div>
<div class="m mr" style="right:874.50px;top:475.27px;color:#2424ff">10.5%</div>
<div class="m mr" style="right:835.00px;top:475.27px;color:#229922">13.2%</div>
<div class="m mr" style="right:790.80px;top:475.27px">110.22</div>
<div class="m mr" style="right:745.60px;top:475.27px">12.05</div>
<div class="m mr" style="right:700.40px;top:475.27px">59.74</div>
<div class="a" style="left:4.00px;top:487.73px;width:27.60px;height:1.40px;background:#000018"></div>
<div class="m mc" style="left:-34.50px;top:490.23px;color:#fff">24</div>
<div class="a" style="left:31.60px;top:489.03px;width:49.80px;height:12.97px;background:#a6caf0"></div>
<div class="nm" style="left:32.30px;top:489.23px;color:#0000ff">藤岡佑介</div>
<div class="m ml" style="left:84.70px;top:489.43px"> 2- 1- 1- 5/ 9</div>
<div class="m mr" style="right:1389.30px;top:489.43px;color:#a02828">22.2%</div>
<div class="m mr" style="right:1349.80px;top:489.43px;color:#2424ff">33.3%</div>
<div class="m mr" style="right:1311.00px;top:489.43px">44.4%</div>
<div class="m mr" style="right:1272.60px;top:489.43px;color:#229922">120</div>
<div class="m mr" style="right:1233.40px;top:489.43px">82</div>
<div class="m mr" style="right:1188.30px;top:489.43px">118.0</div>
<div class="m mr" style="right:1144.10px;top:489.43px">5.4<span class="j">着</span></div>
<div class="m mr" style="right:1105.30px;top:489.43px">2.1<span class="j">人</span></div>
<div class="m mr" style="right:1065.00px;top:489.43px">6.9</div>
<div class="m mr" style="right:1025.60px;top:489.43px;color:#229922">540</div>
<div class="m mr" style="right:986.60px;top:489.43px">185</div>
<div class="m mr" style="right:953.60px;top:489.43px">0</div>
<div class="m mr" style="right:913.30px;top:489.43px">0.0%</div>
<div class="m mr" style="right:874.50px;top:489.43px;color:#2424ff">11.1%</div>
<div class="m mr" style="right:835.00px;top:489.43px;color:#229922">11.1%</div>
<div class="m mr" style="right:790.80px;top:489.43px">100.09</div>
<div class="m mr" style="right:745.60px;top:489.43px">12.01</div>
<div class="m mr" style="right:700.40px;top:489.43px">59.95</div>
<div class="a" style="left:4.00px;top:501.90px;width:27.60px;height:1.40px;background:#000018"></div>
<div class="m mc" style="left:-34.50px;top:504.40px;color:#fff">25</div>
<div class="a" style="left:31.60px;top:503.20px;width:49.80px;height:12.97px;background:#a6caf0"></div>
<div class="nm" style="left:32.30px;top:503.40px;color:#000000">田辺裕信</div>
<div class="m ml" style="left:84.70px;top:503.60px"> 0- 1- 2- 4/ 7</div>
<div class="m mr" style="right:1389.30px;top:503.60px;color:#a02828">0.0%</div>
<div class="m mr" style="right:1349.80px;top:503.60px;color:#2424ff">14.3%</div>
<div class="m mr" style="right:1311.00px;top:503.60px">42.9%</div>
<div class="m mr" style="right:1272.60px;top:503.60px;color:#229922">0</div>
<div class="m mr" style="right:1233.40px;top:503.60px">68</div>
<div class="m mr" style="right:1188.30px;top:503.60px">0.0</div>
<div class="m mr" style="right:1144.10px;top:503.60px">4.4<span class="j">着</span></div>
<div class="m mr" style="right:1105.30px;top:503.60px">2.7<span class="j">人</span></div>
<div class="m mr" style="right:1065.00px;top:503.60px">6.1</div>
<div class="m mr" style="right:986.60px;top:503.60px">160</div>
<div class="m mr" style="right:953.60px;top:503.60px">0</div>
<div class="m mr" style="right:913.30px;top:503.60px">0.0%</div>
<div class="m mr" style="right:874.50px;top:503.60px;color:#2424ff">14.3%</div>
<div class="m mr" style="right:835.00px;top:503.60px;color:#229922">28.6%</div>
<div class="m mr" style="right:790.80px;top:503.60px">100.37</div>
<div class="m mr" style="right:745.60px;top:503.60px">11.91</div>
<div class="m mr" style="right:700.40px;top:503.60px">60.46</div>
<div class="a" style="left:4.00px;top:516.07px;width:27.60px;height:1.40px;background:#000018"></div>
<div class="m mc" style="left:-34.50px;top:518.57px;color:#fff">26</div>
<div class="a" style="left:31.60px;top:517.37px;width:49.80px;height:12.97px;background:#ffff00"></div>
<div class="nm" style="left:32.30px;top:517.57px;color:#0000ff">和田竜二</div>
<div class="m ml" style="left:84.70px;top:517.77px"> 3- 2- 1- 9/15</div>
<div class="m mr" style="right:1389.30px;top:517.77px;color:#a02828">20.0%</div>
<div class="m mr" style="right:1349.80px;top:517.77px;color:#2424ff">33.3%</div>
<div class="m mr" style="right:1311.00px;top:517.77px">40.0%</div>
<div class="m mr" style="right:1272.60px;top:517.77px;color:#229922">129</div>
<div class="m mr" style="right:1233.40px;top:517.77px">102</div>
<div class="m mr" style="right:1188.30px;top:517.77px">115.1</div>
<div class="m mr" style="right:1144.10px;top:517.77px">5.1<span class="j">着</span></div>
<div class="m mr" style="right:1105.30px;top:517.77px">2.6<span class="j">人</span></div>
<div class="m mr" style="right:1065.00px;top:517.77px">6.6</div>
<div class="m mr" style="right:1025.60px;top:517.77px;color:#229922">647</div>
<div class="m mr" style="right:986.60px;top:517.77px">257</div>
<div class="m mr" style="right:953.60px;top:517.77px">0</div>
<div class="m mr" style="right:913.30px;top:517.77px">0.0%</div>
<div class="m mr" style="right:874.50px;top:517.77px;color:#2424ff">13.3%</div>
<div class="m mr" style="right:835.00px;top:517.77px;color:#229922">6.7%</div>
<div class="m mr" style="right:790.80px;top:517.77px">106.43</div>
<div class="m mr" style="right:745.60px;top:517.77px">12.09</div>
<div class="m mr" style="right:700.40px;top:517.77px">59.53</div>
<div class="a" style="left:4.00px;top:530.23px;width:27.60px;height:1.40px;background:#000018"></div>
<div class="m mc" style="left:-34.50px;top:532.73px;color:#fff">27</div>
<div class="a" style="left:31.60px;top:531.53px;width:49.80px;height:12.97px;background:#ffff00"></div>
<div class="nm" style="left:32.30px;top:531.73px;color:#0000ff">武豊</div>
<div class="m ml" style="left:84.70px;top:531.93px"> 5- 3- 3-18/29</div>
<div class="m mr" style="right:1389.30px;top:531.93px;color:#a02828">17.2%</div>
<div class="m mr" style="right:1349.80px;top:531.93px;color:#2424ff">27.6%</div>
<div class="m mr" style="right:1311.00px;top:531.93px">37.9%</div>
<div class="m mr" style="right:1272.60px;top:531.93px;color:#229922">58</div>
<div class="m mr" style="right:1233.40px;top:531.93px">54</div>
<div class="m mr" style="right:1188.30px;top:531.93px">59.8</div>
<div class="m mr" style="right:1144.10px;top:531.93px">6.2<span class="j">着</span></div>
<div class="m mr" style="right:1105.30px;top:531.93px">1.9<span class="j">人</span></div>
<div class="m mr" style="right:1065.00px;top:531.93px">4.4</div>
<div class="m mr" style="right:1025.60px;top:531.93px;color:#229922">340</div>
<div class="m mr" style="right:986.60px;top:531.93px">143</div>
<div class="m mr" style="right:953.60px;top:531.93px">0</div>
<div class="m mr" style="right:913.30px;top:531.93px">0.0%</div>
<div class="m mr" style="right:874.50px;top:531.93px;color:#2424ff">10.3%</div>
<div class="m mr" style="right:835.00px;top:531.93px;color:#229922">10.3%</div>
<div class="m mr" style="right:790.80px;top:531.93px">107.01</div>
<div class="m mr" style="right:745.60px;top:531.93px">12.05</div>
<div class="m mr" style="right:700.40px;top:531.93px">59.74</div>
<div class="a" style="left:4.00px;top:544.40px;width:27.60px;height:1.40px;background:#000018"></div>
<div class="m mc" style="left:-34.50px;top:546.90px;color:#fff">28</div>
<div class="a" style="left:31.60px;top:545.70px;width:49.80px;height:12.97px;background:#ffff00"></div>
<div class="nm" style="left:32.30px;top:545.90px;color:#000000">内田博幸</div>
<div class="m ml" style="left:84.70px;top:546.10px"> 1- 0- 0- 2/ 3</div>
<div class="m mr" style="right:1389.30px;top:546.10px;color:#a02828">33.3%</div>
<div class="m mr" style="right:1349.80px;top:546.10px;color:#2424ff">33.3%</div>
<div class="m mr" style="right:1311.00px;top:546.10px">33.3%</div>
<div class="m mr" style="right:1272.60px;top:546.10px;color:#229922">246</div>
<div class="m mr" style="right:1233.40px;top:546.10px">86</div>
<div class="m mr" style="right:1188.30px;top:546.10px">186.0</div>
<div class="m mr" style="right:1144.10px;top:546.10px">6.0<span class="j">着</span></div>
<div class="m mr" style="right:1105.30px;top:546.10px">2.3<span class="j">人</span></div>
<div class="m mr" style="right:1065.00px;top:546.10px">7.7</div>
<div class="m mr" style="right:1025.60px;top:546.10px;color:#229922">740</div>
<div class="m mr" style="right:986.60px;top:546.10px">260</div>
<div class="m mr" style="right:953.60px;top:546.10px">0</div>
<div class="m mr" style="right:913.30px;top:546.10px">0.0%</div>
<div class="m mr" style="right:874.50px;top:546.10px;color:#2424ff">0.0%</div>
<div class="m mr" style="right:835.00px;top:546.10px;color:#229922">0.0%</div>
<div class="m mr" style="right:790.80px;top:546.10px">143.33</div>
<div class="m mr" style="right:745.60px;top:546.10px">12.29</div>
<div class="m mr" style="right:700.40px;top:546.10px">58.60</div>
<div class="a" style="left:4.00px;top:558.57px;width:27.60px;height:1.40px;background:#000018"></div>
<div class="m mc" style="left:-34.50px;top:561.07px;color:#fff">29</div>
<div class="a" style="left:31.60px;top:559.87px;width:49.80px;height:12.97px;background:#00ff00"></div>
<div class="nm" style="left:32.30px;top:560.07px;color:#000000">戸崎圭太</div>
<div class="m ml" style="left:84.70px;top:560.27px"> 1- 1- 0- 5/ 7</div>
<div class="m mr" style="right:1389.30px;top:560.27px;color:#a02828">14.3%</div>
<div class="m mr" style="right:1349.80px;top:560.27px;color:#2424ff">28.6%</div>
<div class="m mr" style="right:1311.00px;top:560.27px">28.6%</div>
<div class="m mr" style="right:1272.60px;top:560.27px;color:#229922">61</div>
<div class="m mr" style="right:1233.40px;top:560.27px">41</div>
<div class="m mr" style="right:1188.30px;top:560.27px">78.5</div>
<div class="m mr" style="right:1144.10px;top:560.27px">7.4<span class="j">着</span></div>
<div class="m mr" style="right:1105.30px;top:560.27px">1.7<span class="j">人</span></div>
<div class="m mr" style="right:1065.00px;top:560.27px">6.5</div>
<div class="m mr" style="right:1025.60px;top:560.27px;color:#229922">430</div>
<div class="m mr" style="right:986.60px;top:560.27px">145</div>
<div class="m mr" style="right:953.60px;top:560.27px">0</div>
<div class="m mr" style="right:913.30px;top:560.27px">0.0%</div>
<div class="m mr" style="right:874.50px;top:560.27px;color:#2424ff">14.3%</div>
<div class="m mr" style="right:835.00px;top:560.27px;color:#229922">0.0%</div>
<div class="m mr" style="right:790.80px;top:560.27px">129.73</div>
<div class="m mr" style="right:745.60px;top:560.27px">12.27</div>
<div class="m mr" style="right:700.40px;top:560.27px">58.67</div>
<div class="a" style="left:4.00px;top:572.73px;width:27.60px;height:1.40px;background:#000018"></div>
<div class="m mc" style="left:-34.50px;top:575.23px;color:#fff">30</div>
<div class="a" style="left:31.60px;top:574.03px;width:49.80px;height:12.97px;background:#00ffff"></div>
<div class="nm" style="left:32.30px;top:574.23px;color:#ff0000">マーフィ</div>
<div class="m ml" style="left:84.70px;top:574.43px"> 0- 1- 0- 3/ 4</div>
<div class="m mr" style="right:1389.30px;top:574.43px;color:#a02828">0.0%</div>
<div class="m mr" style="right:1349.80px;top:574.43px;color:#2424ff">25.0%</div>
<div class="m mr" style="right:1311.00px;top:574.43px">25.0%</div>
<div class="m mr" style="right:1272.60px;top:574.43px;color:#229922">0</div>
<div class="m mr" style="right:1233.40px;top:574.43px">32</div>
<div class="m mr" style="right:1188.30px;top:574.43px">0.0</div>
<div class="m mr" style="right:1144.10px;top:574.43px">5.8<span class="j">着</span></div>
<div class="m mr" style="right:1105.30px;top:574.43px">2.3<span class="j">人</span></div>
<div class="m mr" style="right:1065.00px;top:574.43px">4.4</div>
<div class="m mr" style="right:986.60px;top:574.43px">130</div>
<div class="m mr" style="right:953.60px;top:574.43px">0</div>
<div class="m mr" style="right:913.30px;top:574.43px">0.0%</div>
<div class="m mr" style="right:874.50px;top:574.43px;color:#2424ff">25.0%</div>
<div class="m mr" style="right:835.00px;top:574.43px;color:#229922">0.0%</div>
<div class="m mr" style="right:790.80px;top:574.43px">105.25</div>
<div class="m mr" style="right:745.60px;top:574.43px">12.03</div>
<div class="m mr" style="right:700.40px;top:574.43px">59.86</div>
<div class="a" style="left:4.00px;top:586.90px;width:27.60px;height:1.40px;background:#000018"></div>
<div class="m mc" style="left:-34.50px;top:589.40px;color:#fff">31</div>
<div class="nm" style="left:32.30px;top:588.40px;color:#0000ff">幸英明</div>
<div class="m ml" style="left:84.70px;top:588.60px"> 0- 1- 0- 3/ 4</div>
<div class="m mr" style="right:1389.30px;top:588.60px;color:#a02828">0.0%</div>
<div class="m mr" style="right:1349.80px;top:588.60px;color:#2424ff">25.0%</div>
<div class="m mr" style="right:1311.00px;top:588.60px">25.0%</div>
<div class="m mr" style="right:1272.60px;top:588.60px;color:#229922">0</div>
<div class="m mr" style="right:1233.40px;top:588.60px">40</div>
<div class="m mr" style="right:1188.30px;top:588.60px">0.0</div>
<div class="m mr" style="right:1144.10px;top:588.60px">8.0<span class="j">着</span></div>
<div class="m mr" style="right:1105.30px;top:588.60px">2.8<span class="j">人</span></div>
<div class="m mr" style="right:1065.00px;top:588.60px">5.6</div>
<div class="m mr" style="right:986.60px;top:588.60px">160</div>
<div class="m mr" style="right:953.60px;top:588.60px">0</div>
<div class="m mr" style="right:913.30px;top:588.60px">0.0%</div>
<div class="m mr" style="right:874.50px;top:588.60px;color:#2424ff">25.0%</div>
<div class="m mr" style="right:835.00px;top:588.60px;color:#229922">0.0%</div>
<div class="m mr" style="right:790.80px;top:588.60px">85.85</div>
<div class="m mr" style="right:745.60px;top:588.60px">11.84</div>
<div class="m mr" style="right:700.40px;top:588.60px">60.80</div>
<div class="a" style="left:4.00px;top:601.07px;width:27.60px;height:1.40px;background:#000018"></div>
<div class="m mc" style="left:-34.50px;top:603.57px;color:#fff">32</div>
<div class="nm" style="left:32.30px;top:602.57px;color:#0000ff">坂井瑠星</div>
<div class="m ml" style="left:84.70px;top:602.77px"> 0- 0- 1- 3/ 4</div>
<div class="m mr" style="right:1389.30px;top:602.77px;color:#a02828">0.0%</div>
<div class="m mr" style="right:1349.80px;top:602.77px;color:#2424ff">0.0%</div>
<div class="m mr" style="right:1311.00px;top:602.77px">25.0%</div>
<div class="m mr" style="right:1272.60px;top:602.77px;color:#229922">0</div>
<div class="m mr" style="right:1233.40px;top:602.77px">37</div>
<div class="m mr" style="right:1188.30px;top:602.77px">0.0</div>
<div class="m mr" style="right:1144.10px;top:602.77px">4.5<span class="j">着</span></div>
<div class="m mr" style="right:1105.30px;top:602.77px">2.3<span class="j">人</span></div>
<div class="m mr" style="right:1065.00px;top:602.77px">6.5</div>
<div class="m mr" style="right:986.60px;top:602.77px">150</div>
<div class="m mr" style="right:953.60px;top:602.77px">0</div>
<div class="m mr" style="right:913.30px;top:602.77px">0.0%</div>
<div class="m mr" style="right:874.50px;top:602.77px;color:#2424ff">0.0%</div>
<div class="m mr" style="right:835.00px;top:602.77px;color:#229922">25.0%</div>
<div class="m mr" style="right:790.80px;top:602.77px">95.13</div>
<div class="m mr" style="right:745.60px;top:602.77px">11.89</div>
<div class="m mr" style="right:700.40px;top:602.77px">60.55</div>
<div class="a" style="left:4.00px;top:615.23px;width:27.60px;height:1.40px;background:#000018"></div>
<div class="m mc" style="left:-34.50px;top:617.73px;color:#fff">33</div>
<div class="a" style="left:31.60px;top:616.53px;width:49.80px;height:12.97px;background:#a6caf0"></div>
<div class="nm" style="left:32.30px;top:616.73px;color:#0000ff">藤岡康太</div>
<div class="m ml" style="left:84.70px;top:616.93px"> 1- 0- 0- 4/ 5</div>
<div class="m mr" style="right:1389.30px;top:616.93px;color:#a02828">20.0%</div>
<div class="m mr" style="right:1349.80px;top:616.93px;color:#2424ff">20.0%</div>
<div class="m mr" style="right:1311.00px;top:616.93px">20.0%</div>
<div class="m mr" style="right:1272.60px;top:616.93px;color:#229922">54</div>
<div class="m mr" style="right:1233.40px;top:616.93px">28</div>
<div class="m mr" style="right:1188.30px;top:616.93px">69.9</div>
<div class="m mr" style="right:1144.10px;top:616.93px">5.4<span class="j">着</span></div>
<div class="m mr" style="right:1105.30px;top:616.93px">2.2<span class="j">人</span></div>
<div class="m mr" style="right:1065.00px;top:616.93px">6.2</div>
<div class="m mr" style="right:1025.60px;top:616.93px;color:#229922">270</div>
<div class="m mr" style="right:986.60px;top:616.93px">140</div>
<div class="m mr" style="right:953.60px;top:616.93px">0</div>
<div class="m mr" style="right:913.30px;top:616.93px">0.0%</div>
<div class="m mr" style="right:874.50px;top:616.93px;color:#2424ff">0.0%</div>
<div class="m mr" style="right:835.00px;top:616.93px;color:#229922">0.0%</div>
<div class="m mr" style="right:790.80px;top:616.93px">103.70</div>
<div class="m mr" style="right:745.60px;top:616.93px">12.06</div>
<div class="m mr" style="right:700.40px;top:616.93px">59.71</div>
<div class="a" style="left:4.00px;top:629.40px;width:27.60px;height:1.40px;background:#000018"></div>
<div class="m mc" style="left:-34.50px;top:631.90px;color:#fff">34</div>
<div class="nm" style="left:32.30px;top:630.90px;color:#000000">丸山元気</div>
<div class="m ml" style="left:84.70px;top:631.10px"> 0- 0- 0- 5/ 5</div>
<div class="m mr" style="right:1389.30px;top:631.10px;color:#a02828">0.0%</div>
<div class="m mr" style="right:1349.80px;top:631.10px;color:#2424ff">0.0%</div>
<div class="m mr" style="right:1311.00px;top:631.10px">0.0%</div>
<div class="m mr" style="right:1272.60px;top:631.10px;color:#229922">0</div>
<div class="m mr" style="right:1233.40px;top:631.10px">0</div>
<div class="m mr" style="right:1188.30px;top:631.10px">0.0</div>
<div class="m mr" style="right:1144.10px;top:631.10px">8.2<span class="j">着</span></div>
<div class="m mr" style="right:1105.30px;top:631.10px">3.0<span class="j">人</span></div>
<div class="m mr" style="right:1065.00px;top:631.10px">7.3</div>
<div class="m mr" style="right:953.60px;top:631.10px">0</div>
<div class="m mr" style="right:913.30px;top:631.10px">0.0%</div>
<div class="m mr" style="right:874.50px;top:631.10px;color:#2424ff">0.0%</div>
<div class="m mr" style="right:835.00px;top:631.10px;color:#229922">0.0%</div>
<div class="m mr" style="right:790.80px;top:631.10px">93.66</div>
<div class="m mr" style="right:745.60px;top:631.10px">12.01</div>
<div class="m mr" style="right:700.40px;top:631.10px">59.96</div>
<div class="a" style="left:4.00px;top:643.57px;width:27.60px;height:1.40px;background:#000018"></div>
<div class="m mc" style="left:-34.50px;top:646.07px;color:#fff">35</div>
<div class="a" style="left:31.60px;top:644.87px;width:49.80px;height:12.97px;background:#a6caf0"></div>
<div class="nm" style="left:32.30px;top:645.07px;color:#000000">横山武史</div>
<div class="m ml" style="left:84.70px;top:645.27px"> 0- 0- 0- 3/ 3</div>
<div class="m mr" style="right:1389.30px;top:645.27px;color:#a02828">0.0%</div>
<div class="m mr" style="right:1349.80px;top:645.27px;color:#2424ff">0.0%</div>
<div class="m mr" style="right:1311.00px;top:645.27px">0.0%</div>
<div class="m mr" style="right:1272.60px;top:645.27px;color:#229922">0</div>
<div class="m mr" style="right:1233.40px;top:645.27px">0</div>
<div class="m mr" style="right:1188.30px;top:645.27px">0.0</div>
<div class="m mr" style="right:1144.10px;top:645.27px">6.7<span class="j">着</span></div>
<div class="m mr" style="right:1105.30px;top:645.27px">2.7<span class="j">人</span></div>
<div class="m mr" style="right:1065.00px;top:645.27px">6.6</div>
<div class="m mr" style="right:953.60px;top:645.27px">0</div>
<div class="m mr" style="right:913.30px;top:645.27px">0.0%</div>
<div class="m mr" style="right:874.50px;top:645.27px;color:#2424ff">0.0%</div>
<div class="m mr" style="right:835.00px;top:645.27px;color:#229922">0.0%</div>
<div class="m mr" style="right:790.80px;top:645.27px">140.63</div>
<div class="m mr" style="right:745.60px;top:645.27px">12.41</div>
<div class="m mr" style="right:700.40px;top:645.27px">58.02</div>
<div class="a" style="left:4.00px;top:657.73px;width:27.60px;height:1.40px;background:#000018"></div>
<div class="m mc" style="left:-34.50px;top:660.23px;color:#fff">36</div>
<div class="nm" style="left:32.30px;top:659.23px;color:#ff0000">ミナリク</div>
<div class="m ml" style="left:84.70px;top:659.43px"> 0- 0- 0- 2/ 2</div>
<div class="m mr" style="right:1389.30px;top:659.43px;color:#a02828">0.0%</div>
<div class="m mr" style="right:1349.80px;top:659.43px;color:#2424ff">0.0%</div>
<div class="m mr" style="right:1311.00px;top:659.43px">0.0%</div>
<div class="m mr" style="right:1272.60px;top:659.43px;color:#229922">0</div>
<div class="m mr" style="right:1233.40px;top:659.43px">0</div>
<div class="m mr" style="right:1188.30px;top:659.43px">0.0</div>
<div class="m mr" style="right:1144.10px;top:659.43px">8.0<span class="j">着</span></div>
<div class="m mr" style="right:1105.30px;top:659.43px">3.0<span class="j">人</span></div>
<div class="m mr" style="right:1065.00px;top:659.43px">6.0</div>
<div class="m mr" style="right:953.60px;top:659.43px">0</div>
<div class="m mr" style="right:913.30px;top:659.43px">0.0%</div>
<div class="m mr" style="right:874.50px;top:659.43px;color:#2424ff">0.0%</div>
<div class="m mr" style="right:835.00px;top:659.43px;color:#229922">0.0%</div>
<div class="m mr" style="right:790.80px;top:659.43px">109.95</div>
<div class="m mr" style="right:745.60px;top:659.43px">12.22</div>
<div class="m mr" style="right:700.40px;top:659.43px">58.94</div>
<div class="a" style="left:4.00px;top:672.00px;width:27.60px;height:1.20px;background:#000018"></div>
<div class="a" style="left:31.20px;top:162.80px;width:50.60px;height:13.97px;border:1.3px solid #a02020;box-sizing:border-box"></div>
<div class="a" style="left:0.00px;top:741.00px;width:1600.00px;height:54.30px;background:#f0f0f0"></div>
<div class="a" style="left:1597.50px;top:741.00px;width:1.50px;height:55.00px;background:#707070"></div>
<div class="a" style="left:6.00px;top:744.40px;width:101.00px;height:25.20px;border:1px solid #fff;border-right-color:#a0a0a0;border-bottom-color:#a0a0a0;box-sizing:border-box"></div>
<div class="a" style="left:9.40px;top:746.90px;width:19.60px;height:20.00px;box-sizing:border-box;background:#f8f8f8;border-top:1px solid #696969;border-left:1px solid #696969;border-right:1px solid #fff;border-bottom:1px solid #fff;box-shadow:inset 1px 1px #a0a0a0;"></div>
<div id="f83" class="t" style="left:15.60px;top:757.00px;line-height:0;font-size:10.5px;color:#000;transform-origin:0 0;transform:scaleX(0.8545);">全</div>
<div class="a" style="left:30.00px;top:746.90px;width:19.60px;height:20.00px;box-sizing:border-box;background:#f0f0f0;border-top:1px solid #fff;border-left:1px solid #fff;border-right:1px solid #696969;border-bottom:1px solid #696969;box-shadow:inset -1px -1px #a0a0a0;"></div>
<div id="f84" class="t" style="left:35.60px;top:757.00px;line-height:0;font-size:10.5px;color:#000;transform-origin:0 0;transform:scaleX(0.8545);">芝</div>
<div class="a" style="left:50.00px;top:746.90px;width:27.00px;height:20.00px;box-sizing:border-box;background:#f0f0f0;border-top:1px solid #fff;border-left:1px solid #fff;border-right:1px solid #696969;border-bottom:1px solid #696969;box-shadow:inset -1px -1px #a0a0a0;"></div>
<div id="f85" class="t" style="left:50.20px;top:756.50px;line-height:0;font-size:10.5px;color:#000;transform-origin:0 0;transform:scaleX(0.8000);">ダート</div>
<div class="a" style="left:78.00px;top:746.90px;width:26.60px;height:20.00px;box-sizing:border-box;background:#f0f0f0;border-top:1px solid #fff;border-left:1px solid #fff;border-right:1px solid #696969;border-bottom:1px solid #696969;box-shadow:inset -1px -1px #a0a0a0;"></div>
<div id="f86" class="t" style="left:81.00px;top:757.00px;line-height:0;font-size:10.5px;color:#000;transform-origin:0 0;transform:scaleX(0.9091);">障害</div>
<div class="a" style="left:109.00px;top:744.40px;width:72.60px;height:25.20px;border:1px solid #fff;border-right-color:#a0a0a0;border-bottom-color:#a0a0a0;box-sizing:border-box"></div>
<div class="a" style="left:112.00px;top:746.90px;width:24.50px;height:20.00px;box-sizing:border-box;background:#f8f8f8;border-top:1px solid #696969;border-left:1px solid #696969;border-right:1px solid #fff;border-bottom:1px solid #fff;box-shadow:inset 1px 1px #a0a0a0;"></div>
<div id="f87" class="t" style="left:115.00px;top:756.50px;line-height:0;font-size:10.5px;color:#000;transform-origin:0 0;transform:scaleX(0.8636);">全性</div>
<div class="a" style="left:136.50px;top:746.90px;width:23.50px;height:20.00px;box-sizing:border-box;background:#f0f0f0;border-top:1px solid #fff;border-left:1px solid #fff;border-right:1px solid #696969;border-bottom:1px solid #696969;box-shadow:inset -1px -1px #a0a0a0;"></div>
<div id="f88" class="t" style="left:138.00px;top:756.50px;line-height:0;font-size:10.5px;color:#000;transform-origin:0 0;transform:scaleX(0.6061);">牡セン</div>
<div class="a" style="left:161.00px;top:746.90px;width:18.00px;height:20.00px;box-sizing:border-box;background:#f0f0f0;border-top:1px solid #fff;border-left:1px solid #fff;border-right:1px solid #696969;border-bottom:1px solid #696969;box-shadow:inset -1px -1px #a0a0a0;"></div>
<div id="f89" class="t" style="left:165.60px;top:756.50px;line-height:0;font-size:10.5px;color:#000;transform-origin:0 0;transform:scaleX(0.7636);">牝</div>
<div class="a" style="left:186.00px;top:744.40px;width:90.90px;height:25.20px;border:1px solid #fff;border-right-color:#a0a0a0;border-bottom-color:#a0a0a0;box-sizing:border-box"></div>
<div class="a" style="left:187.80px;top:746.90px;width:19.10px;height:20.00px;box-sizing:border-box;background:#f8f8f8;border-top:1px solid #696969;border-left:1px solid #696969;border-right:1px solid #fff;border-bottom:1px solid #fff;box-shadow:inset 1px 1px #a0a0a0;"></div>
<div id="f90" class="t" style="left:194.00px;top:757.00px;line-height:0;font-size:10.5px;color:#000;transform-origin:0 0;transform:scaleX(0.8182);">全</div>
<div class="a" style="left:207.00px;top:746.90px;width:24.00px;height:20.00px;box-sizing:border-box;background:#f0f0f0;border-top:1px solid #fff;border-left:1px solid #fff;border-right:1px solid #696969;border-bottom:1px solid #696969;box-shadow:inset -1px -1px #a0a0a0;"></div>
<div id="f91" class="t" style="left:208.80px;top:757.00px;line-height:0;font-size:10.5px;color:#000;transform-origin:0 0;transform:scaleX(0.8727);">関東</div>
<div class="a" style="left:231.00px;top:746.90px;width:24.60px;height:20.00px;box-sizing:border-box;background:#f0f0f0;border-top:1px solid #fff;border-left:1px solid #fff;border-right:1px solid #696969;border-bottom:1px solid #696969;box-shadow:inset -1px -1px #a0a0a0;"></div>
<div id="f92" class="t" style="left:233.80px;top:756.50px;line-height:0;font-size:10.5px;color:#000;transform-origin:0 0;transform:scaleX(0.8727);">関西</div>
<div class="a" style="left:256.00px;top:746.90px;width:18.60px;height:20.00px;box-sizing:border-box;background:#f0f0f0;border-top:1px solid #fff;border-left:1px solid #fff;border-right:1px solid #696969;border-bottom:1px solid #696969;box-shadow:inset -1px -1px #a0a0a0;"></div>
<div id="f93" class="t" style="left:260.60px;top:756.50px;line-height:0;font-size:10.5px;color:#000;transform-origin:0 0;transform:scaleX(0.8000);">他</div>
<div class="a" style="left:279.40px;top:751.90px;width:10.00px;height:10.00px;background:#fff;border-top:1px solid #808080;border-left:1px solid #808080;border-bottom:1px solid #f0f0f0;border-right:1px solid #f0f0f0;box-sizing:border-box"></div>
<div id="f94" class="t" style="left:293.75px;top:756.50px;line-height:0;font-size:10.5px;color:#000;transform-origin:0 0;transform:scaleX(0.8220);">多頭出しのみ</div>
<div class="a" style="left:356.00px;top:751.90px;width:10.00px;height:10.00px;background:#fff;border-top:1px solid #808080;border-left:1px solid #808080;border-bottom:1px solid #f0f0f0;border-right:1px solid #f0f0f0;box-sizing:border-box"></div>
<div id="f95" class="t" style="left:370.60px;top:756.00px;line-height:0;font-size:10.5px;color:#000;transform-origin:0 0;transform:scaleX(0.7709);">マル外のみ</div>
<div class="a" style="left:420.00px;top:751.90px;width:10.00px;height:10.00px;background:#fff;border-top:1px solid #808080;border-left:1px solid #808080;border-bottom:1px solid #f0f0f0;border-right:1px solid #f0f0f0;box-sizing:border-box"></div>
<div id="f96" class="t" style="left:435.00px;top:756.50px;line-height:0;font-size:10.5px;color:#000;transform-origin:0 0;transform:scaleX(0.8635);">牝馬限定除く</div>
<div class="a" style="left:496.90px;top:744.40px;width:84.10px;height:25.20px;border:1px solid #fff;border-right-color:#a0a0a0;border-bottom-color:#a0a0a0;box-sizing:border-box"></div>
<div id="f97" class="t" style="left:498.75px;top:756.00px;line-height:0;font-size:10.5px;color:#000;transform-origin:0 0;transform:scaleX(0.6953);">マーク</div>
<div class="a" style="left:524.40px;top:746.90px;width:17.60px;height:20.00px;box-sizing:border-box;background:#f8f8f8;border-top:1px solid #696969;border-left:1px solid #696969;border-right:1px solid #fff;border-bottom:1px solid #fff;box-shadow:inset 1px 1px #a0a0a0;"></div>
<div id="f98" class="t" style="left:530.00px;top:757.00px;line-height:0;font-size:10.5px;color:#000;transform-origin:0 0;transform:scaleX(0.8545);">全</div>
<div class="a" style="left:542.50px;top:746.90px;width:18.10px;height:20.00px;box-sizing:border-box;background:#f0f0f0;border-top:1px solid #fff;border-left:1px solid #fff;border-right:1px solid #696969;border-bottom:1px solid #696969;box-shadow:inset -1px -1px #a0a0a0;"></div>
<div id="f99" class="t" style="left:546.90px;top:756.50px;line-height:0;font-size:10.5px;color:#000;transform-origin:0 0;transform:scaleX(0.9091);">有</div>
<div class="a" style="left:561.00px;top:746.90px;width:18.75px;height:20.00px;box-sizing:border-box;background:#f0f0f0;border-top:1px solid #fff;border-left:1px solid #fff;border-right:1px solid #696969;border-bottom:1px solid #696969;box-shadow:inset -1px -1px #a0a0a0;"></div>
<div id="f100" class="t" style="left:565.60px;top:756.50px;line-height:0;font-size:10.5px;color:#000;transform-origin:0 0;transform:scaleX(0.8545);">無</div>
<div class="a" style="left:620.00px;top:749.00px;width:83.75px;height:16.60px;background:#fff;border-top:1px solid #a0a0a0;border-left:1px solid #a0a0a0;box-sizing:border-box"></div>
<div id="f101" class="t" style="left:623.72px;top:757.50px;line-height:0;font-size:10px;color:#000;transform-origin:0 0;transform:scaleX(0.9463);">（簡易絞り込み）</div>
<svg class="a" style="left:708.75px;top:753px" width="10.7" height="8" viewBox="0 0 10.7 8"><path d="M0 0H10.7L5.35 8Z" fill="#7a7a7a"/></svg>
<div id="f102" class="t" style="left:6.04px;top:780.80px;line-height:0;font-size:10.5px;color:#000;transform-origin:0 0;transform:scaleX(0.8629);">ソート:複勝率順</div>
<div class="a" style="left:137.50px;top:773.75px;width:149.00px;height:17.50px;background:#00ffff"></div>
<div id="f103" class="t" style="left:141.00px;top:782.30px;line-height:0;font-size:10.5px;color:#000;transform-origin:0 0;transform:scaleX(0.8341);">最少レース機会数</div>
<div class="a" style="left:220.00px;top:775.60px;width:32.00px;height:12.40px;background:#fff"></div>
<div id="f104" class="t" style="left:220.25px;top:781.00px;line-height:0;font-size:11px;color:#000;transform-origin:0 0;transform:scaleX(0.7917);font-weight:bold;-webkit-text-stroke:0">2</div>
<div class="a" style="left:254.00px;top:775.25px;width:27.90px;height:14.50px;box-sizing:border-box;background:#f0f0f0;border-top:1px solid #fff;border-left:1px solid #fff;border-right:1px solid #696969;border-bottom:1px solid #696969;box-shadow:inset -1px -1px #a0a0a0;"></div>
<div id="f105" class="t" style="left:258.00px;top:782.50px;line-height:0;font-size:10.5px;color:#000;transform-origin:0 0;transform:scaleX(0.8864);">設定</div>
<div class="a" style="left:0.00px;top:795.30px;width:1600.00px;height:1.80px;background:#6a6a6a"></div>
<div class="a" style="left:0.00px;top:797.10px;width:1600.00px;height:1.00px;background:#d8e8f8"></div>
<div class="a" style="left:0.00px;top:798.10px;width:1600.00px;height:2.20px;background:#98c0ec"></div>
<div class="a" style="left:0.00px;top:800.30px;width:1600.00px;height:1.00px;background:#c8c8b0"></div>
<div class="a" style="left:0.00px;top:801.30px;width:1600.00px;height:2.40px;background:#ffff99"></div>
<div class="a" style="left:0.00px;top:803.70px;width:1600.00px;height:62.80px;background:#f0f0f0"></div>
<div class="a" style="left:0.00px;top:803.70px;width:1600.00px;height:1.30px;background:#a0a0a0"></div>
<div id="f106" class="t" style="left:1.90px;top:811.50px;line-height:0;font-size:10.5px;color:#000;transform-origin:0 0;transform:scaleX(0.8979);">合計 387 件</div>
<div class="a" style="left:83.75px;top:804.50px;width:1.20px;height:14.50px;background:#808080"></div>
<div class="a" style="left:333.00px;top:804.50px;width:1.20px;height:14.50px;background:#808080"></div>
<div class="a" style="left:483.75px;top:804.50px;width:1.20px;height:14.50px;background:#808080"></div>
<div class="a" style="left:83.75px;top:805.00px;width:248.00px;height:14.00px;border-top:1px solid #b0b0b0;box-sizing:border-box"></div>
<div id="f107" class="t" style="left:85.00px;top:811.50px;line-height:0;font-size:10.5px;color:#000;transform-origin:0 0;transform:scaleX(0.8683);">読み込み範囲 2020.1.5～2020.12.27 (358日間)</div>
<div id="f108" class="t" style="left:334.40px;top:811.50px;line-height:0;font-size:10.5px;color:#000;transform-origin:0 0;transform:scaleX(0.9088);">集計期間件数計 387 件</div>
<div id="f109" class="t" style="left:485.00px;top:811.50px;line-height:0;font-size:10.5px;color:#000;transform-origin:0 0;transform:scaleX(0.8701);">集計範囲 2020.1.5～2020.12.27 (358日間)</div>
<div class="a" style="left:0.00px;top:819.00px;width:1600.00px;height:1.20px;background:#fff"></div>
<div id="f110" class="t" style="left:0.45px;top:826.30px;line-height:0;font-size:9px;color:#000;transform-origin:0 0;transform:scaleX(1.4500);font-family:'Liberation Sans'"><b>✕</b></div>
<div class="a" style="left:9.50px;top:822.50px;width:1.00px;height:8.00px;background:#000"></div>
<div id="f111" class="t" style="left:19.17px;top:826.80px;line-height:0;font-size:10.5px;color:#000;transform-origin:0 0;transform:scaleX(0.8318);font-family:'Liberation Mono',monospace;">F1</div>
<div id="f112" class="t" style="left:63.57px;top:826.80px;line-height:0;font-size:10.5px;color:#000;transform-origin:0 0;transform:scaleX(0.8274);font-family:'Liberation Mono',monospace;">F2</div>
<div id="f113" class="t" style="left:106.09px;top:826.80px;line-height:0;font-size:10.5px;color:#000;transform-origin:0 0;transform:scaleX(0.8052);font-family:'Liberation Mono',monospace;">F3</div>
<div id="f114" class="t" style="left:148.52px;top:826.80px;line-height:0;font-size:10.5px;color:#000;transform-origin:0 0;transform:scaleX(0.8849);font-family:'Liberation Mono',monospace;">F4</div>
<div id="f115" class="t" style="left:193.57px;top:826.80px;line-height:0;font-size:10.5px;color:#000;transform-origin:0 0;transform:scaleX(0.8274);font-family:'Liberation Mono',monospace;">F5</div>
<div id="f116" class="t" style="left:237.93px;top:826.80px;line-height:0;font-size:10.5px;color:#000;transform-origin:0 0;transform:scaleX(0.8185);font-family:'Liberation Mono',monospace;">F6</div>
<div id="f117" class="t" style="left:281.07px;top:826.80px;line-height:0;font-size:10.5px;color:#000;transform-origin:0 0;transform:scaleX(0.8274);font-family:'Liberation Mono',monospace;">F7</div>
<div id="f118" class="t" style="left:324.77px;top:826.80px;line-height:0;font-size:10.5px;color:#000;transform-origin:0 0;transform:scaleX(0.8318);font-family:'Liberation Mono',monospace;">F8</div>
<div id="f119" class="t" style="left:368.57px;top:826.80px;line-height:0;font-size:10.5px;color:#000;transform-origin:0 0;transform:scaleX(0.8274);font-family:'Liberation Mono',monospace;">F9</div>
<div id="f120" class="t" style="left:409.18px;top:826.80px;line-height:0;font-size:10.5px;color:#000;transform-origin:0 0;transform:scaleX(0.8181);font-family:'Liberation Mono',monospace;">F10</div>
<div id="f121" class="t" style="left:453.58px;top:826.80px;line-height:0;font-size:10.5px;color:#000;transform-origin:0 0;transform:scaleX(0.8152);font-family:'Liberation Mono',monospace;">F11</div>
<div id="f122" class="t" style="left:496.68px;top:826.80px;line-height:0;font-size:10.5px;color:#000;transform-origin:0 0;transform:scaleX(0.8181);font-family:'Liberation Mono',monospace;">F12</div>
<div class="a" style="left:535.00px;top:823.75px;width:64.00px;height:8.20px;background:#263470"></div>
<div id="f123" class="t" style="left:541.00px;top:828.30px;line-height:0;font-size:8px;color:#fff;transform-origin:0 0;transform:scaleX(1.1232);"><i><b>TARGET&nbsp;&nbsp;JV</b></i></div>
<div class="a" style="left:3.75px;top:833.75px;width:41.25px;height:13.75px;box-sizing:border-box;background:#f0f0f0;border-top:1px solid #fff;border-left:1px solid #fff;border-right:1px solid #696969;border-bottom:1px solid #696969;box-shadow:inset -1px -1px #a0a0a0;"></div>
<div id="f124" class="t" style="left:8.00px;top:840.50px;line-height:0;font-size:10.5px;color:#000;transform-origin:0 0;transform:scaleX(0.9706);">ヘルプ</div>
<div class="a" style="left:46.00px;top:833.75px;width:43.40px;height:13.75px;box-sizing:border-box;background:#f0f0f0;border-top:1px solid #fff;border-left:1px solid #fff;border-right:1px solid #696969;border-bottom:1px solid #696969;box-shadow:inset -1px -1px #a0a0a0;"></div>
<div id="f125" class="t" style="left:48.00px;top:840.50px;line-height:0;font-size:10.5px;color:#000;transform-origin:0 0;transform:scaleX(1.0270);">同検索↓</div>
<div class="a" style="left:90.00px;top:833.75px;width:42.50px;height:13.75px;box-sizing:border-box;background:#f0f0f0;border-top:1px solid #fff;border-left:1px solid #fff;border-right:1px solid #696969;border-bottom:1px solid #696969;box-shadow:inset -1px -1px #a0a0a0;"></div>
<div id="f126" class="t" style="left:92.00px;top:840.50px;line-height:0;font-size:10.5px;color:#000;transform-origin:0 0;transform:scaleX(0.8773);">項目集計</div>
<div class="a" style="left:133.00px;top:833.75px;width:43.00px;height:13.75px;box-sizing:border-box;background:#f0f0f0;border-top:1px solid #fff;border-left:1px solid #fff;border-right:1px solid #696969;border-bottom:1px solid #696969;box-shadow:inset -1px -1px #a0a0a0;"></div>
<div id="f127" class="t" style="left:140.00px;top:840.00px;line-height:0;font-size:10.5px;color:#000;transform-origin:0 0;transform:scaleX(0.8909);">各平均</div>
<div class="a" style="left:178.75px;top:833.75px;width:42.50px;height:13.75px;box-sizing:border-box;background:#f0f0f0;border-top:1px solid #fff;border-left:1px solid #fff;border-right:1px solid #696969;border-bottom:1px solid #696969;box-shadow:inset -1px -1px #a0a0a0;"></div>
<div id="f128" class="t" style="left:180.16px;top:840.50px;line-height:0;font-size:10.5px;color:#000;transform-origin:0 0;transform:scaleX(0.9190);">３行表示</div>
<div class="a" style="left:221.90px;top:833.75px;width:43.10px;height:13.75px;box-sizing:border-box;background:#f0f0f0;border-top:1px solid #fff;border-left:1px solid #fff;border-right:1px solid #696969;border-bottom:1px solid #696969;box-shadow:inset -1px -1px #a0a0a0;"></div>
<div id="f129" class="t" style="left:223.75px;top:840.50px;line-height:0;font-size:10.5px;color:#000;transform-origin:0 0;transform:scaleX(0.8920);">条件設定</div>
<div class="a" style="left:266.25px;top:833.75px;width:41.75px;height:13.75px;box-sizing:border-box;background:#f0f0f0;border-top:1px solid #fff;border-left:1px solid #fff;border-right:1px solid #696969;border-bottom:1px solid #696969;box-shadow:inset -1px -1px #a0a0a0;"></div>
<div id="f130" class="t" style="left:267.08px;top:840.50px;line-height:0;font-size:10.5px;color:#000;transform-origin:0 0;transform:scaleX(0.9167);">ﾚｰｽ集計</div>
<div class="a" style="left:308.75px;top:833.75px;width:43.15px;height:13.75px;box-sizing:border-box;background:#f0f0f0;border-top:1px solid #fff;border-left:1px solid #fff;border-right:1px solid #696969;border-bottom:1px solid #696969;box-shadow:inset -1px -1px #a0a0a0;"></div>
<div id="f131" class="t" style="left:320.60px;top:840.50px;line-height:0;font-size:10.5px;color:#000;transform-origin:0 0;transform:scaleX(0.8952);">出力</div>
<div class="a" style="left:355.00px;top:833.75px;width:42.50px;height:13.75px;box-sizing:border-box;background:#f0f0f0;border-top:1px solid #fff;border-left:1px solid #fff;border-right:1px solid #696969;border-bottom:1px solid #696969;box-shadow:inset -1px -1px #a0a0a0;"></div>
<div id="f132" class="t" style="left:356.00px;top:840.50px;line-height:0;font-size:10.5px;color:#000;transform-origin:0 0;transform:scaleX(0.9091);">読み込み</div>
<div class="a" style="left:398.00px;top:833.75px;width:42.60px;height:13.75px;box-sizing:border-box;background:#f0f0f0;border-top:1px solid #fff;border-left:1px solid #fff;border-right:1px solid #696969;border-bottom:1px solid #696969;box-shadow:inset -1px -1px #a0a0a0;"></div>
<div class="a" style="left:441.90px;top:833.75px;width:42.50px;height:13.75px;box-sizing:border-box;background:#f0f0f0;border-top:1px solid #fff;border-left:1px solid #fff;border-right:1px solid #696969;border-bottom:1px solid #696969;box-shadow:inset -1px -1px #a0a0a0;"></div>
<div id="f133" class="t" style="left:443.85px;top:840.50px;line-height:0;font-size:10.5px;color:#000;transform-origin:0 0;transform:scaleX(0.8511);">馬ﾃﾞｰﾀ読</div>
<div class="a" style="left:485.00px;top:833.75px;width:42.50px;height:13.75px;box-sizing:border-box;background:#f0f0f0;border-top:1px solid #fff;border-left:1px solid #fff;border-right:1px solid #696969;border-bottom:1px solid #696969;box-shadow:inset -1px -1px #a0a0a0;"></div>
<div id="f134" class="t" style="left:491.00px;top:840.00px;line-height:0;font-size:10.5px;color:#000;transform-origin:0 0;transform:scaleX(0.9062);">閉じる</div>
<div id="f135" class="t" style="left:535.00px;top:839.80px;line-height:0;font-size:10.5px;color:#000;transform-origin:0 0;transform:scaleX(0.8669);">F1キーを押すと現在開いている画面の説明(ヘルプ画面)が表示されます</div>
<div class="a" style="left:0.00px;top:853.00px;width:1600.00px;height:1.20px;background:#a0a0a0"></div>
<div class="a" style="left:0.30px;top:853.00px;width:1.10px;height:12.50px;background:#a0a0a0"></div>
<div class="a" style="left:0.00px;top:865.50px;width:1600.00px;height:1.00px;background:#fafafa"></div>
<div class="a" style="left:458.50px;top:854.50px;width:1.20px;height:12.00px;background:#a0a0a0;box-shadow:1px 0 #fff"></div>
<div class="a" style="left:609.40px;top:854.50px;width:1.20px;height:12.00px;background:#a0a0a0;box-shadow:1px 0 #fff"></div>
<div class="a" style="left:793.00px;top:854.50px;width:1.20px;height:12.00px;background:#a0a0a0;box-shadow:1px 0 #fff"></div>
<div id="f136" class="t" style="left:494.40px;top:860.00px;line-height:0;font-size:10.5px;color:#1a2a50;transform-origin:0 0;transform:scaleX(0.9937);">ｳｲﾝﾄﾞｳ位置 1/ 1</div>
<div id="f137" class="t" style="left:661.00px;top:859.50px;line-height:0;font-size:10.5px;color:#1a2a50;transform-origin:0 0;transform:scaleX(0.9782);">2020年12月30日</div>
<svg class="a" style="left:1588px;top:855px" width="11" height="11" viewBox="0 0 11 11"><path d="M10 3L3 10M10 6L6 10M10 9L9 10" stroke="#a0a0a0" stroke-width="1"/></svg>
<div class="a" style="left:0.00px;top:866.50px;width:1600.00px;height:33.50px;background:#202020"></div>
<svg class="a" style="left:13px;top:876px" width="14" height="14" viewBox="0 0 14 14"><path d="M0 2L6 1.2V6.6H0Z M6.8 1.1L14 0V6.6H6.8Z M0 7.4H6V12.8L0 12Z M6.8 7.4H14V14L6.8 12.9Z" fill="#fff"/></svg>
<div class="a" style="left:40.00px;top:867.00px;width:287.00px;height:33.00px;background:#f0f0f0"></div>
<svg class="a" style="left:49px;top:875px" width="16" height="16" viewBox="0 0 16 16"><circle cx="9.5" cy="6.5" r="4.5" fill="none" stroke="#222" stroke-width="1.3"/><path d="M6.3 9.7L1.5 14.5" stroke="#222" stroke-width="1.5"/></svg>
<div id="f138" class="t" style="left:72.12px;top:884.00px;line-height:0;font-size:11.5px;color:#333;transform-origin:0 0;transform:scaleX(0.8785);">ここに入力して検索</div>
<svg class="a" style="left:338px;top:875px" width="16" height="16" viewBox="0 0 16 16"><circle cx="8" cy="8" r="6" fill="none" stroke="#fff" stroke-width="1.8"/></svg>
<svg class="a" style="left:378.0px;top:873.0px" width="20" height="20" viewBox="0 0 20 20"><circle cx="10" cy="10" r="9.5" fill="#1a8fd0"/><path d="M3 12C4 6 14 4 17 10C15 8 8 8 8 12C8 15 12 17 16 15C12 20 4 18 3 12Z" fill="#4fd48a"/><circle cx="11" cy="11" r="3" fill="#1a5fb0"/></svg>
<svg class="a" style="left:419.0px;top:873.0px" width="20" height="20" viewBox="0 0 20 20"><path d="M2 6H18V19H2Z" fill="#f4f4f4"/><path d="M6 6V3H14V6" fill="none" stroke="#f4f4f4" stroke-width="1.5"/><rect x="6" y="9" width="3.5" height="3.5" fill="#f25022"/><rect x="10.5" y="9" width="3.5" height="3.5" fill="#7fba00"/><rect x="6" y="13.5" width="3.5" height="3.5" fill="#00a4ef"/><rect x="10.5" y="13.5" width="3.5" height="3.5" fill="#ffb900"/></svg>
<svg class="a" style="left:460.0px;top:873.0px" width="20" height="20" viewBox="0 0 20 20"><rect x="6" y="2" width="13" height="12" fill="#28a8ea"/><rect x="1" y="4" width="10" height="12" fill="#0a64c8"/><text x="2.5" y="14" font-size="10" fill="#fff" font-family="Liberation Sans" font-weight="bold">O</text><path d="M9 12H20V20H9Z" fill="#f2b05a"/><path d="M9 12L14.5 16L20 12" fill="none" stroke="#c07020"/></svg>
<svg class="a" style="left:501.0px;top:873.0px" width="20" height="20" viewBox="0 0 20 20"><rect x="1" y="2" width="18" height="13" fill="#e8f0f8"/><rect x="2" y="3" width="16" height="10" fill="#1a78c8"/><rect x="4" y="7" width="12" height="2" fill="#fff"/><rect x="7" y="16" width="6" height="2" fill="#ddd"/><rect x="4" y="18" width="12" height="1.5" fill="#ddd"/></svg>
<svg class="a" style="left:542.0px;top:873.0px" width="20" height="20" viewBox="0 0 20 20"><circle cx="10" cy="11" r="8.5" fill="#ff7139"/><circle cx="10" cy="12" r="5" fill="#7542e5"/><path d="M2 9C3 3 8 1 12 2C8 3 6 6 7 9Z" fill="#ffbd4f"/></svg>
<svg class="a" style="left:583.0px;top:873.0px" width="20" height="20" viewBox="0 0 20 20"><path d="M1 4H8L10 6H19V18H1Z" fill="#f8c84a"/><rect x="1" y="8" width="18" height="10" fill="#ffd966"/><rect x="7" y="12" width="6" height="6" fill="#1f7fd4"/></svg>
<svg class="a" style="left:624.0px;top:873.0px" width="20" height="20" viewBox="0 0 20 20"><circle cx="10" cy="10" r="9.5" fill="#db4437"/><path d="M10 10L1.8 5A9.5 9.5 0 0 0 6 18.6Z" fill="#0f9d58"/><path d="M10 10L6 18.6A9.5 9.5 0 0 0 19.5 9Z" fill="#ffcd40"/><circle cx="10" cy="10" r="4.2" fill="#fff"/><circle cx="10" cy="10" r="3.3" fill="#4285f4"/></svg>
<svg class="a" style="left:665.0px;top:873.0px" width="20" height="20" viewBox="0 0 20 20"><circle cx="10" cy="10" r="9" fill="#3b7fe0"/><circle cx="10" cy="10" r="7" fill="#6aa8f8"/><path d="M8 5H12V11H8Z M8 13H12V15H8Z" fill="#fff"/></svg>
<svg class="a" style="left:706.0px;top:873.0px" width="20" height="20" viewBox="0 0 20 20"><rect x="1" y="1" width="18" height="18" rx="3" fill="#111"/><path d="M10 3C8 3 9 8 12 13C13 15 17 15 17 13C16 11 8 12 4 15C3 16 4 17 5 16C8 12 9 7 10 3Z" fill="none" stroke="#fff" stroke-width="1.3"/></svg>
<svg class="a" style="left:747.0px;top:873.0px" width="20" height="20" viewBox="0 0 20 20"><path d="M3 2H17L19 17H1Z" fill="#8a8a8a"/><circle cx="10" cy="10.5" r="7.5" fill="#fff"/><path d="M10 10.5L6 6.5M10 10.5L14 6.5M10 10.5V17" stroke="#222" stroke-width="1.5"/></svg>
<svg class="a" style="left:787.0px;top:873.0px" width="20" height="20" viewBox="0 0 20 20"><rect x="1" y="1" width="18" height="18" rx="2.5" fill="#001e36"/><text x="10" y="14" text-anchor="middle" font-size="10" font-weight="bold" fill="#31a8ff" font-family="Liberation Sans">Lr</text></svg>
<svg class="a" style="left:828.0px;top:873.0px" width="20" height="20" viewBox="0 0 20 20"><rect x="1" y="1" width="18" height="18" rx="2.5" fill="#330000"/><text x="10" y="14" text-anchor="middle" font-size="10" font-weight="bold" fill="#ff9a00" font-family="Liberation Sans">Ai</text></svg>
<svg class="a" style="left:869.0px;top:873.0px" width="20" height="20" viewBox="0 0 20 20"><rect x="1" y="1" width="18" height="18" rx="2.5" fill="#49021f"/><text x="10" y="14" text-anchor="middle" font-size="10" font-weight="bold" fill="#ff3366" font-family="Liberation Sans">Id</text></svg>
<svg class="a" style="left:910.0px;top:873.0px" width="20" height="20" viewBox="0 0 20 20"><rect x="1" y="1" width="18" height="18" rx="2.5" fill="#001e36"/><text x="10" y="14" text-anchor="middle" font-size="10" font-weight="bold" fill="#31a8ff" font-family="Liberation Sans">Ps</text></svg>
<svg class="a" style="left:951.0px;top:873.0px" width="20" height="20" viewBox="0 0 20 20"><rect x="2" y="1" width="16" height="18" fill="#d0d0d0"/><text x="10" y="16" text-anchor="middle" font-size="15" font-weight="bold" fill="#f4f4f4" font-family="Liberation Sans">J</text></svg>
<div class="a" style="left:983.00px;top:867.00px;width:38.00px;height:33.00px;background:#404040"></div>
<svg class="a" style="left:991.0px;top:873.0px" width="20" height="20" viewBox="0 0 20 20"><rect x="1" y="1" width="18" height="18" fill="#00f000"/><rect x="1" y="1" width="18" height="5" fill="#20e8f0"/><path d="M5 4C6.5 2 9.5 2.5 11 4C12.5 2 15.5 1.5 18 4C17 7 14 7.5 12.5 7C11 8.5 8 9 6.5 7.5C5.5 6.5 5 5.5 5 4Z" fill="#a81010"/><circle cx="10" cy="3.8" r="1.3" fill="#2030f0"/><path d="M2 9L5 11L8 10M11 10L14 11L17 9" fill="none" stroke="#106040" stroke-width="1.5"/><text x="10" y="18" text-anchor="middle" font-size="7" font-weight="bold" fill="#1030e0" font-family="Liberation Sans">JV</text></svg>
<div class="a" style="left:454.00px;top:898.00px;width:33.00px;height:2.00px;background:#76b9ed"></div>
<div class="a" style="left:617.00px;top:898.00px;width:34.00px;height:2.00px;background:#76b9ed"></div>
<div class="a" style="left:944.00px;top:898.00px;width:34.00px;height:2.00px;background:#76b9ed"></div>
<div class="a" style="left:983.00px;top:898.00px;width:38.00px;height:2.00px;background:#76b9ed"></div>
<svg class="a" style="left:1296px;top:878px" width="12" height="8" viewBox="0 0 12 8"><path d="M1 7L6 2L11 7" fill="none" stroke="#fff" stroke-width="1.2"/></svg>
<svg class="a" style="left:1320px;top:876px" width="16" height="12" viewBox="0 0 16 12"><path d="M3 11C0 11 0 7 3 7C3 3 9 2 10 6C13 5 15 8 14 11Z" fill="#e8e8e8"/></svg>
<svg class="a" style="left:1348px;top:875px" width="14" height="13" viewBox="0 0 14 13"><path d="M3.5 0L7 2.2L3.5 4.4L0 2.2Z M10.5 0L14 2.2L10.5 4.4L7 2.2Z M3.5 4.4L7 6.6L3.5 8.8L0 6.6Z M10.5 4.4L14 6.6L10.5 8.8L7 6.6Z M7 9L10.5 11L7 13L3.5 11Z" fill="#fff"/></svg>
<svg class="a" style="left:1377px;top:876px" width="14" height="12" viewBox="0 0 14 12"><path d="M1 11A10 10 0 0 1 11 1 M3.5 11A7.5 7.5 0 0 1 11 3.5 M6 11A5 5 0 0 1 11 6" fill="none" stroke="#ddd" stroke-width="1"/><circle cx="11" cy="10" r="1.3" fill="#fff"/></svg>
<svg class="a" style="left:1401px;top:877px" width="15" height="10" viewBox="0 0 15 10"><rect x="3" y="2" width="11" height="7" fill="none" stroke="#fff"/><rect x="4.5" y="3.5" width="8" height="4" fill="#fff"/><path d="M0 3H4M2 1V5" stroke="#fff"/></svg>
<svg class="a" style="left:1428px;top:875px" width="15" height="13" viewBox="0 0 15 13"><path d="M1 4H4L8 1V12L4 9H1Z" fill="none" stroke="#fff"/><path d="M10 4A3 3 0 0 1 10 9 M12 2A6 6 0 0 1 12 11" fill="none" stroke="#fff"/></svg>
<div id="f139" class="t" style="left:1452.00px;top:883.00px;line-height:0;font-size:14px;color:#fff;transform-origin:0 0;transform:scaleX(1.1000);">A</div>
<div class="a" style="left:1476.00px;top:876.00px;width:14.00px;height:14.00px;background:#fff"></div>
<div class="a" style="left:1478.00px;top:878.00px;width:10.00px;height:10.00px;background:#202020;border-radius:5px"></div>
<div id="f140" class="t" style="left:1481.50px;top:883.50px;line-height:0;font-size:8px;color:#fff;transform-origin:0 0;transform:scaleX(0.8750);font-weight:bold;-webkit-text-stroke:0">J</div>
<div id="f141" class="t" style="left:1515.00px;top:877.00px;line-height:0;font-size:10px;color:#fff;transform-origin:0 0;transform:scaleX(0.8640);">12:50</div>
<div id="f142" class="t" style="left:1503.00px;top:892.00px;line-height:0;font-size:10px;color:#fff;transform-origin:0 0;transform:scaleX(0.9507);">2020/12/30</div>
<svg class="a" style="left:1565px;top:875px" width="24" height="22" viewBox="0 0 24 22"><path d="M1 1H14V10H4L1 13Z" fill="#fff"/><path d="M3 3.5H12M3 5.5H12M3 7.5H9" stroke="#202020" stroke-width=".8"/><circle cx="16.5" cy="13" r="7" fill="#202020" stroke="#888"/><text x="16.5" y="16.5" text-anchor="middle" font-size="9" fill="#fff" font-family="Liberation Sans">23</text></svg>
<div class="a" style="left:1598.50px;top:867.00px;width:1.50px;height:33.00px;background:#606060"></div>
</body></html>
